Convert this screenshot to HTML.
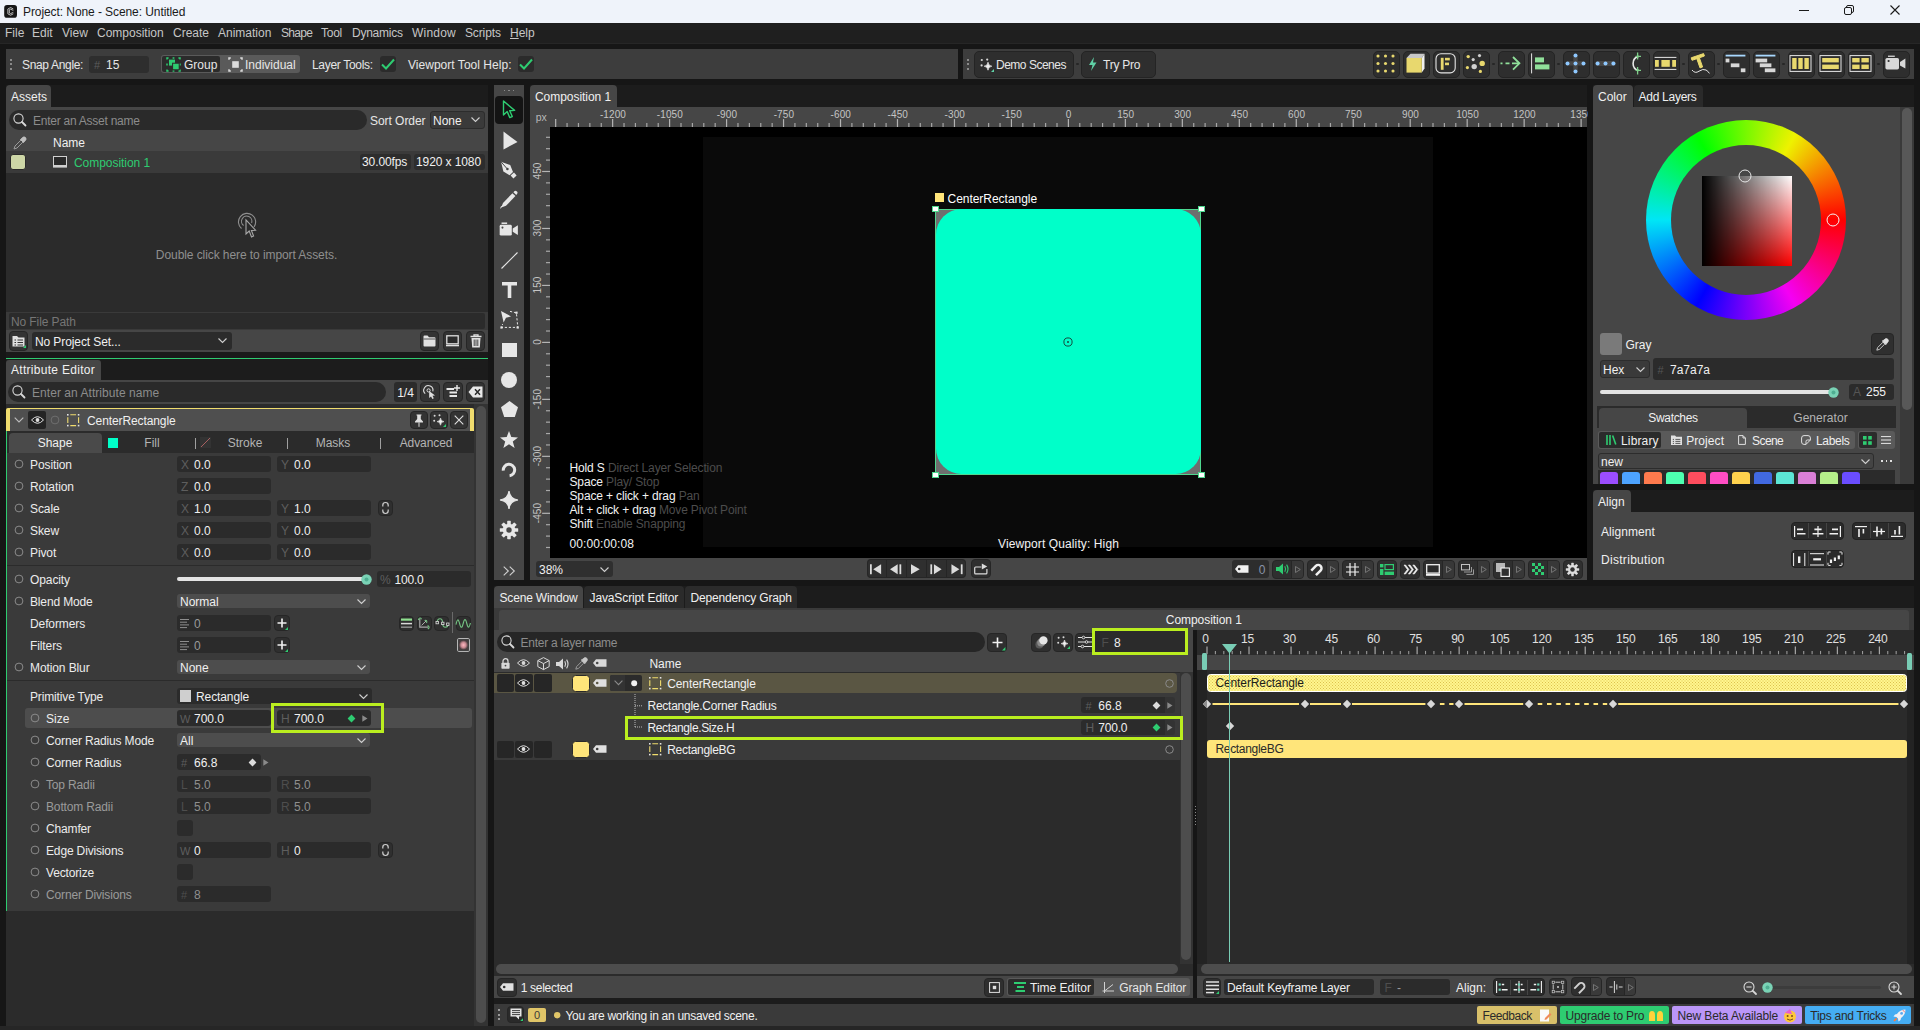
<!DOCTYPE html>
<html><head><meta charset="utf-8"><title>Cavalry</title>
<style>
html,body{margin:0;padding:0;}
body{width:1920px;height:1030px;overflow:hidden;background:#161616;position:relative;font-family:"Liberation Sans",sans-serif;font-size:12px;color:#e6e6e6;}
.a{position:absolute;box-sizing:border-box;}
.t{position:absolute;white-space:nowrap;}
svg{position:absolute;overflow:visible;}
</style></head><body>

<!-- parts.p01_top -->
<div class="a" style="left:0px;top:0px;width:1920px;height:23px;background:#eff3fa;"></div>
<svg style="left:3.6px;top:4.8px;" width="13.2" height="12.8" viewBox="0 0 16 16"><rect x="0" y="0" width="16" height="16" rx="3.6" fill="#161616"/><path d="M11.4 5 L8 3.2 L4.6 5 L4.6 11 L8 12.8 L11.4 11 M11.4 6.8 L8 5.2 L6.4 6 L6.4 10 L8 10.8 L11.4 9.2" fill="none" stroke="#e6e6e6" stroke-width="1"/></svg>
<div class="t" style="top:3.5px;height:16px;line-height:16px;font-size:12px;color:#1a1a1a;letter-spacing:-0.08px;left:23px;">Project: None - Scene: Untitled</div>
<svg style="left:1799px;top:5px;" width="12" height="12" viewBox="0 0 12 12"><path d="M0 5.5 H10" stroke="#1a1a1a" stroke-width="1"/></svg>
<svg style="left:1844px;top:5px;" width="12" height="12" viewBox="0 0 12 12"><rect x="0.5" y="2.5" width="7" height="7" rx="1.5" fill="none" stroke="#1a1a1a" stroke-width="1"/><path d="M2.5 2.5 V2 Q2.5 0.5 4 0.5 H8 Q9.5 0.5 9.5 2 V6 Q9.5 7.5 8 7.5 H7.5" fill="none" stroke="#1a1a1a" stroke-width="1"/></svg>
<svg style="left:1890px;top:5px;" width="12" height="12" viewBox="0 0 12 12"><path d="M0.5 0.5 L9.5 9.5 M9.5 0.5 L0.5 9.5" stroke="#1a1a1a" stroke-width="1.1"/></svg>
<div class="a" style="left:0px;top:23px;width:1920px;height:20px;background:#1f1f1f;"></div>
<div class="t" style="top:24.7px;height:16px;line-height:16px;font-size:12px;color:#c6c6c6;left:5px;">File</div>
<div class="t" style="top:24.7px;height:16px;line-height:16px;font-size:12px;color:#c6c6c6;left:32px;">Edit</div>
<div class="t" style="top:24.7px;height:16px;line-height:16px;font-size:12px;color:#c6c6c6;left:62px;">View</div>
<div class="t" style="top:24.7px;height:16px;line-height:16px;font-size:12px;color:#c6c6c6;left:97px;">Composition</div>
<div class="t" style="top:24.7px;height:16px;line-height:16px;font-size:12px;color:#c6c6c6;left:173px;">Create</div>
<div class="t" style="top:24.7px;height:16px;line-height:16px;font-size:12px;color:#c6c6c6;left:218px;">Animation</div>
<div class="t" style="top:24.7px;height:16px;line-height:16px;font-size:12px;color:#c6c6c6;letter-spacing:-0.7px;left:281px;">Shape</div>
<div class="t" style="top:24.7px;height:16px;line-height:16px;font-size:12px;color:#c6c6c6;letter-spacing:-0.25px;left:321px;">Tool</div>
<div class="t" style="top:24.7px;height:16px;line-height:16px;font-size:12px;color:#c6c6c6;letter-spacing:-0.25px;left:352px;">Dynamics</div>
<div class="t" style="top:24.7px;height:16px;line-height:16px;font-size:12px;color:#c6c6c6;letter-spacing:0.2px;left:412px;">Window</div>
<div class="t" style="top:24.7px;height:16px;line-height:16px;font-size:12px;color:#c6c6c6;letter-spacing:-0.13px;left:465px;">Scripts</div>
<div class="t" style="top:24.7px;height:16px;line-height:16px;font-size:12px;color:#c6c6c6;left:510px;"><span style="text-decoration:underline">H</span>elp</div>
<div class="a" style="left:0px;top:43px;width:1920px;height:1px;background:#262626;"></div>
<div class="a" style="left:6px;top:49px;width:952px;height:30px;background:#3d3d3d;"></div>
<div class="a" style="left:9.6px;top:58.8px;width:2px;height:2px;background:#8a8a8a;"></div>
<div class="a" style="left:9.6px;top:63.3px;width:2px;height:2px;background:#8a8a8a;"></div>
<div class="a" style="left:9.6px;top:67.8px;width:2px;height:2px;background:#8a8a8a;"></div>
<div class="t" style="top:56.5px;height:16px;line-height:16px;font-size:12px;color:#e6e6e6;letter-spacing:-0.33px;left:22px;">Snap Angle:</div>
<div class="a" style="left:89px;top:56px;width:60px;height:17px;background:#2e2e2e;border-radius:3px;"></div>
<div class="t" style="top:56.5px;height:16px;line-height:16px;font-size:11px;color:#5c5c5c;left:94px;">#</div>
<div class="t" style="top:56.5px;height:16px;line-height:16px;font-size:12px;color:#e6e6e6;left:106px;">15</div>
<div class="a" style="left:161px;top:55px;width:139px;height:18px;background:#5a5a5a;border-radius:3px;"></div>
<div class="a" style="left:162px;top:56px;width:58px;height:16px;background:#2b2b2b;border-radius:2px;"></div>
<svg style="left:167.3px;top:57.8px;" width="13" height="13" viewBox="0 0 13 13"><path d="M0 1.6 V0 H1.6 M5.6 0 H7.4 M11.4 0 H13 V1.6 M13 5.6 V7.4 M13 11.4 V13 H11.4 M7.4 13 H5.6 M1.6 13 H0 V11.4 M0 7.4 V5.6" fill="none" stroke="#2ecc71" stroke-width="1.5"/><rect x="2" y="1.6" width="6" height="6" fill="#2ecc71"/><rect x="5.6" y="5.2" width="6.6" height="6.6" fill="#2ecc71" stroke="#2b2b2b" stroke-width="1"/></svg>
<div class="t" style="top:56.5px;height:16px;line-height:16px;font-size:12px;color:#e6e6e6;left:184px;">Group</div>
<svg style="left:228.8px;top:57.8px;" width="13" height="13" viewBox="0 0 13 13"><rect x="3.2" y="3.2" width="6.6" height="6.6" fill="#dcdcdc"/><path d="M0 1.8 V0 H1.8 M11.2 0 H13 V1.8 M13 11.2 V13 H11.2 M1.8 13 H0 V11.2" fill="none" stroke="#dcdcdc" stroke-width="1.5"/></svg>
<div class="t" style="top:56.5px;height:16px;line-height:16px;font-size:12px;color:#e6e6e6;left:245px;">Individual</div>
<div class="t" style="top:56.5px;height:16px;line-height:16px;font-size:12px;color:#e6e6e6;letter-spacing:-0.31px;left:312px;">Layer Tools:</div>
<div class="a" style="left:380px;top:56px;width:16px;height:16px;background:#2b2b2b;border-radius:3px;"></div>
<svg style="left:380px;top:56px;" width="16" height="16" viewBox="0 0 16 16"><path d="M2 8.5 L6 12.5 L14 3.5" fill="none" stroke="#2ecc71" stroke-width="2"/></svg>
<div class="t" style="top:56.5px;height:16px;line-height:16px;font-size:12px;color:#e6e6e6;letter-spacing:0.03px;left:408px;">Viewport Tool Help:</div>
<div class="a" style="left:518px;top:56px;width:16px;height:16px;background:#2b2b2b;border-radius:3px;"></div>
<svg style="left:518px;top:56px;" width="16" height="16" viewBox="0 0 16 16"><path d="M2 8.5 L6 12.5 L14 3.5" fill="none" stroke="#2ecc71" stroke-width="2"/></svg>
<div class="a" style="left:963px;top:49px;width:951px;height:30px;background:#3d3d3d;"></div>
<div class="a" style="left:967.1px;top:58.8px;width:2px;height:2px;background:#8a8a8a;"></div>
<div class="a" style="left:967.1px;top:63.3px;width:2px;height:2px;background:#8a8a8a;"></div>
<div class="a" style="left:967.1px;top:67.8px;width:2px;height:2px;background:#8a8a8a;"></div>
<div class="a" style="left:974px;top:51px;width:100px;height:27px;background:#2e2e2e;border-radius:5px;border:1px solid #242424;"></div>
<svg style="left:980px;top:57.5px;" width="14" height="14" viewBox="0 0 14 14"><circle cx="1.8" cy="2" r="1.1" fill="#d8d8d8"/><circle cx="7.2" cy="1.6" r="1.1" fill="#d8d8d8"/><circle cx="1.6" cy="7.4" r="1.1" fill="#d8d8d8"/><path d="M8 4.2 Q8.3 7.9 11.8 8.2 Q8.3 8.5 8 12.2 Q7.7 8.5 4.2 8.2 Q7.7 7.9 8 4.2 Z" fill="#f0f0f0" stroke="#f0f0f0" stroke-width="0.7"/><path d="M11 14 L14 14 L14 11 Z" fill="#5fd0a5"/></svg>
<div class="t" style="top:56.5px;height:16px;line-height:16px;font-size:12px;color:#e6e6e6;letter-spacing:-0.49px;left:996px;">Demo Scenes</div>
<div class="a" style="left:1076.2px;top:62.8px;width:2.6px;height:2.6px;background:#262626;border-radius:1.3px;"></div>
<div class="a" style="left:1081px;top:51px;width:75px;height:27px;background:#2e2e2e;border-radius:5px;border:1px solid #242424;"></div>
<svg style="left:1088px;top:57px;" width="10" height="15" viewBox="0 0 10 15"><path d="M6 0 L1 8 H4.5 L3 14 L8.5 5.5 H5 Z" fill="#5fd0a5"/></svg>
<div class="t" style="top:56.5px;height:16px;line-height:16px;font-size:12px;color:#e6e6e6;letter-spacing:-0.24px;left:1103px;">Try Pro</div>
<!-- parts.p02_assets -->
<div class="a" style="left:6px;top:85px;width:482px;height:22px;background:#1c1c1c;"></div>
<div class="a" style="left:6px;top:85px;width:45px;height:22px;background:#464646;border-radius:4px 4px 0 0;"></div>
<div class="t" style="top:88.5px;height:16px;line-height:16px;font-size:12px;color:#f0f0f0;left:11px;">Assets</div>
<div class="a" style="left:6px;top:107px;width:482px;height:44px;background:#464646;"></div>
<div class="a" style="left:9px;top:110px;width:358px;height:20px;background:#2a2a2a;border-radius:10px;"></div>
<svg style="left:13px;top:113px;" width="14" height="14" viewBox="0 0 14 14"><circle cx="5.5" cy="5.5" r="4.6" fill="none" stroke="#d8d8d8" stroke-width="1.1"/><path d="M9 9 L12.5 12.5" stroke="#d8d8d8" stroke-width="1.8" stroke-linecap="round"/></svg>
<div class="t" style="top:112.5px;height:16px;line-height:16px;font-size:12px;color:#8c8c8c;letter-spacing:-0.25px;left:33px;">Enter an Asset name</div>
<div class="t" style="top:112.5px;height:16px;line-height:16px;font-size:12px;color:#e6e6e6;letter-spacing:-0.05px;left:370px;">Sort Order</div>
<div class="a" style="left:430px;top:111px;width:55px;height:18px;background:#3a3a3a;border-radius:3px;border:1px solid #2c2c2c;"></div>
<div class="t" style="top:112.5px;height:16px;line-height:16px;font-size:12px;color:#f0f0f0;left:433px;">None</div>
<svg style="left:471px;top:117px;" width="9" height="6" viewBox="0 0 9 6"><path d="M0.5 0.5 L4.5 4.5 L8.5 0.5" fill="none" stroke="#cfcfcf" stroke-width="1.1"/></svg>
<svg style="left:13px;top:136px;" width="14" height="14" viewBox="0 0 14 14"><path d="M1 13 L2 10 L8 4 L10 6 L4 12 Z" fill="none" stroke="#9a9a9a" stroke-width="1"/><path d="M7.5 3.5 L10.5 6.5 M9 2 Q11 0 12.5 1.5 Q14 3 12 5 L10.5 6.5 L7.5 3.5 Z" fill="#bdbdbd" stroke="#bdbdbd" stroke-width="0.8"/></svg>
<div class="t" style="top:134.5px;height:16px;line-height:16px;font-size:12px;color:#f0f0f0;left:53px;">Name</div>
<div class="a" style="left:6px;top:151px;width:482px;height:22px;background:#3a3a3a;"></div>
<div class="a" style="left:10px;top:154px;width:16px;height:16px;background:#cdd6a6;border-radius:3px;border:1px solid #2a2a2a;"></div>
<svg style="left:53px;top:156px;" width="14" height="12" viewBox="0 0 14 12"><rect x="0.5" y="0.5" width="13" height="9" fill="#2a2a2a" stroke="#d0d0d0" stroke-width="1"/><rect x="0" y="10" width="14" height="1.6" fill="#d0d0d0"/></svg>
<div class="t" style="top:154.5px;height:16px;line-height:16px;font-size:12px;color:#2ecc71;letter-spacing:-0.05px;left:74px;">Composition 1</div>
<div class="a" style="left:360px;top:154px;width:51px;height:16px;background:#2d2d2d;border-radius:3px;"></div>
<div class="t" style="top:154px;height:16px;line-height:16px;font-size:12px;color:#f0f0f0;letter-spacing:-0.1px;left:362px;">30.00fps</div>
<div class="a" style="left:414px;top:154px;width:71px;height:16px;background:#2d2d2d;border-radius:3px;"></div>
<div class="t" style="top:154px;height:16px;line-height:16px;font-size:12px;color:#f0f0f0;letter-spacing:-0.1px;left:416px;">1920 x 1080</div>
<div class="a" style="left:6px;top:173px;width:482px;height:139px;background:#2b2b2b;"></div>
<svg style="left:236px;top:211px;" width="24" height="30" viewBox="0 0 24 30"><path d="M5.5 17.5 A8.6 8.6 0 1 1 18 16" fill="none" stroke="#8f8f8f" stroke-width="1.1"/><path d="M7.6 14.5 A5.2 5.2 0 1 1 15.6 12" fill="none" stroke="#8f8f8f" stroke-width="1.1"/><path d="M10 9 L10 23 L13.2 20 L15.5 26 L17.6 25 L15.4 19.4 L19.5 19.2 Z" fill="#2b2b2b" stroke="#a8a8a8" stroke-width="1.1"/></svg>
<div class="t" style="top:246.5px;height:16px;line-height:16px;font-size:12px;color:#8f8f8f;letter-spacing:-0.08px;left:246.5px;transform:translateX(-50%);">Double click here to import Assets.</div>
<div class="a" style="left:6px;top:312px;width:482px;height:40px;background:#464646;"></div>
<div class="a" style="left:6px;top:312px;width:482px;height:18px;background:#3a3a3a;"></div>
<div class="a" style="left:9px;top:313px;width:476px;height:16px;background:#2b2b2b;border-radius:2px;"></div>
<div class="t" style="top:313.5px;height:16px;line-height:16px;font-size:12px;color:#767676;letter-spacing:-0.1px;left:11px;">No File Path</div>
<div class="a" style="left:9px;top:331px;width:19px;height:20px;background:#333;border-radius:4px;border:1px solid #262626;"></div>
<svg style="left:12px;top:334px;" width="14" height="14" viewBox="0 0 14 14"><path d="M0.5 2 H5 L6.5 3.5 H12.5 V12.5 H0.5 Z" fill="#e0e0e0"/><path d="M2.5 6 H4 M5.5 6 H11 M2.5 8.5 H4 M5.5 8.5 H11 M2.5 11 H4 M5.5 11 H11" stroke="#333" stroke-width="1.2"/><path d="M11 14 L14 14 L14 11 Z" fill="#2ecc71"/></svg>
<div class="a" style="left:32px;top:332px;width:200px;height:18px;background:#2b2b2b;border-radius:3px;"></div>
<div class="t" style="top:333.5px;height:16px;line-height:16px;font-size:12px;color:#f0f0f0;letter-spacing:-0.1px;left:35px;">No Project Set...</div>
<svg style="left:218px;top:338px;" width="9" height="6" viewBox="0 0 9 6"><path d="M0.5 0.5 L4.5 4.5 L8.5 0.5" fill="none" stroke="#cfcfcf" stroke-width="1.1"/></svg>
<div class="a" style="left:420px;top:331px;width:19px;height:20px;background:#333;border-radius:4px;border:1px solid #262626;"></div>
<div class="a" style="left:443px;top:331px;width:19px;height:20px;background:#333;border-radius:4px;border:1px solid #262626;"></div>
<div class="a" style="left:466px;top:331px;width:19px;height:20px;background:#333;border-radius:4px;border:1px solid #262626;"></div>
<svg style="left:423px;top:335px;" width="13" height="12" viewBox="0 0 13 12"><path d="M0.5 1.5 Q0.5 0.5 1.5 0.5 H4.5 L6 2.2 H11.5 Q12.5 2.2 12.5 3.2 V10.5 Q12.5 11.5 11.5 11.5 H1.5 Q0.5 11.5 0.5 10.5 Z" fill="#e0e0e0"/><path d="M0.5 4 H12.5" stroke="#333" stroke-width="0.8"/></svg>
<svg style="left:446px;top:335px;" width="13" height="12" viewBox="0 0 13 12"><rect x="0.8" y="0.8" width="11.4" height="8" fill="#2b2b2b" stroke="#e0e0e0" stroke-width="1.3"/><rect x="0" y="9.8" width="13" height="1.5" fill="#e0e0e0"/></svg>
<svg style="left:470px;top:334px;" width="12" height="14" viewBox="0 0 12 14"><path d="M0.5 2.5 H11.5 M4 2.5 V0.8 H8 V2.5" stroke="#e0e0e0" stroke-width="1.3" fill="none"/><path d="M1.5 4 H10.5 L9.8 13.5 H2.2 Z" fill="#e0e0e0"/><path d="M4.2 5.5 V12 M6 5.5 V12 M7.8 5.5 V12" stroke="#333" stroke-width="0.9"/></svg>
<div class="a" style="left:6px;top:352px;width:482px;height:6px;background:#1a1a1a;"></div>
<div class="a" style="left:6px;top:357.5px;width:482px;height:1.5px;background:#2ecc71;"></div>
<!-- parts.p03_attr -->
<div class="a" style="left:6px;top:359px;width:482px;height:21px;background:#1c1c1c;"></div>
<div class="a" style="left:6px;top:359.5px;width:95px;height:21px;background:#464646;border-radius:3px 3px 0 0;"></div>
<div class="t" style="top:362px;height:16px;line-height:16px;font-size:12px;color:#f0f0f0;letter-spacing:0.29px;left:11px;">Attribute Editor</div>
<div class="a" style="left:6px;top:380px;width:482px;height:24px;background:#464646;"></div>
<div class="a" style="left:8px;top:382px;width:378px;height:20px;background:#2a2a2a;border-radius:10px;"></div>
<svg style="left:12px;top:385px;" width="14" height="14" viewBox="0 0 14 14"><circle cx="5.5" cy="5.5" r="4.6" fill="none" stroke="#d8d8d8" stroke-width="1.1"/><path d="M9 9 L12.5 12.5" stroke="#d8d8d8" stroke-width="1.8" stroke-linecap="round"/></svg>
<div class="t" style="top:384.5px;height:16px;line-height:16px;font-size:12px;color:#8c8c8c;letter-spacing:0.05px;left:32px;">Enter an Attribute name</div>
<div class="a" style="left:394px;top:382px;width:23px;height:20px;background:#2b2b2b;border-radius:3px;"></div>
<div class="t" style="top:384.5px;height:16px;line-height:16px;font-size:12px;color:#f0f0f0;left:405.5px;transform:translateX(-50%);">1/4</div>
<div class="a" style="left:420px;top:382px;width:19.5px;height:20px;background:#333;border-radius:4px;border:1px solid #262626;"></div>
<div class="a" style="left:443px;top:382px;width:19.5px;height:20px;background:#333;border-radius:4px;border:1px solid #262626;"></div>
<div class="a" style="left:465.5px;top:382px;width:19.5px;height:20px;background:#333;border-radius:4px;border:1px solid #262626;"></div>
<svg style="left:423px;top:385px;" width="14" height="14" viewBox="0 0 14 14"><path d="M2.2 8.6 A4.6 4.6 0 1 1 9.8 6.4" fill="none" stroke="#e0e0e0" stroke-width="1.1"/><circle cx="5.6" cy="5.4" r="1.6" fill="none" stroke="#e0e0e0" stroke-width="1"/><path d="M6.2 6 L6.2 13 L8 11.4 L9.4 14 L10.8 13.3 L9.5 10.8 L12 10.6 Z" fill="#e0e0e0"/></svg>
<svg style="left:446px;top:385px;" width="14" height="14" viewBox="0 0 14 14"><path d="M0.5 4 H8 M3.5 7.5 H11 M3.5 11 H11" stroke="#e8e8e8" stroke-width="2"/><path d="M11 0 V6 M8 3 H14" stroke="#e8e8e8" stroke-width="1.4"/></svg>
<svg style="left:468px;top:386px;" width="15" height="12" viewBox="0 0 15 12"><path d="M0.5 6 L5 0.5 H14.5 V11.5 H5 Z" fill="#e8e8e8"/><path d="M7 3.2 L12 8.8 M12 3.2 L7 8.8" stroke="#2b2b2b" stroke-width="1.5"/></svg>
<div class="a" style="left:6px;top:404px;width:482px;height:622px;background:#2b2b2b;"></div>
<div class="a" style="left:474px;top:404px;width:14px;height:622px;background:#333;"></div>
<div class="a" style="left:476px;top:405.5px;width:10px;height:617px;background:#4d4d4d;border-radius:5px;"></div>
<div class="a" style="left:6px;top:408px;width:468px;height:23px;background:#4f4f4f;border-top:1.5px solid #f0dc6e;border-left:4.3px solid #f0dc6e;border-right:4.2px solid #f0dc6e;border-radius:2px 2px 0 0;"></div>
<svg style="left:14px;top:416.5px;" width="10" height="7" viewBox="0 0 10 7"><path d="M0.7 0.7 L5 5 L9.3 0.7" fill="none" stroke="#bdbdbd" stroke-width="1.1"/></svg>
<div class="a" style="left:28px;top:411px;width:18px;height:17.5px;background:#242424;border-radius:2px;"></div>
<svg style="left:30.5px;top:414.5px;" width="13" height="10" viewBox="0 0 13 10"><path d="M0.5 5 Q6.5 -1.6 12.5 5 Q6.5 11.6 0.5 5 Z" fill="none" stroke="#e0e0e0" stroke-width="1"/><circle cx="6.5" cy="5" r="1.9" fill="#e0e0e0"/></svg>
<svg style="left:50px;top:415px;" width="10" height="10" viewBox="0 0 10 10"><circle cx="5" cy="5" r="3.9" fill="none" stroke="#6e6e6e" stroke-width="1"/></svg>
<svg style="left:66.8px;top:413.8px;" width="12.4" height="12.4" viewBox="0 0 12.4 12.4"><rect x="0" y="0" width="1.6" height="1.6" fill="#e4e4e4"/><rect x="10.8" y="0" width="1.6" height="1.6" fill="#e4e4e4"/><rect x="0" y="10.8" width="1.6" height="1.6" fill="#e4e4e4"/><rect x="10.8" y="10.8" width="1.6" height="1.6" fill="#e4e4e4"/><path d="M3.3 0.8 H9.1 M3.3 11.6 H9.1 M0.8 3.3 V9.1 M11.6 3.3 V9.1" stroke="#f0dc6e" stroke-width="1.1"/></svg>
<div class="t" style="top:412.5px;height:16px;line-height:16px;font-size:12px;color:#f0f0f0;letter-spacing:-0.1px;left:87px;">CenterRectangle</div>
<div class="a" style="left:410px;top:411px;width:18px;height:18px;background:#333;border-radius:4px;border:1px solid #262626;"></div>
<div class="a" style="left:430px;top:411px;width:18px;height:18px;background:#333;border-radius:4px;border:1px solid #262626;"></div>
<div class="a" style="left:450px;top:411px;width:18px;height:18px;background:#333;border-radius:4px;border:1px solid #262626;"></div>
<svg style="left:414px;top:413.5px;" width="10" height="13" viewBox="0 0 10 13"><path d="M2.5 0.5 H7.5 V1.6 H6.8 V5 L9 7.6 V8.4 H1 V7.6 L3.2 5 V1.6 H2.5 Z" fill="#e0e0e0"/><path d="M5 8.4 V12.8" stroke="#e0e0e0" stroke-width="1"/></svg>
<svg style="left:433px;top:414px;" width="13" height="13" viewBox="0 0 13 13"><circle cx="1.6" cy="1.8" r="1" fill="#d8d8d8"/><circle cx="6.5" cy="1.2" r="1" fill="#d8d8d8"/><circle cx="1.2" cy="6.8" r="1" fill="#d8d8d8"/><path d="M7.5 4 Q7.8 7.3 11 7.6 Q7.8 7.9 7.5 11.2 Q7.2 7.9 4 7.6 Q7.2 7.3 7.5 4 Z" fill="#f0f0f0" stroke="#f0f0f0" stroke-width="0.6"/><path d="M10 13 L13 13 L13 10 Z" fill="#2ecc71"/></svg>
<svg style="left:454px;top:415px;" width="10" height="10" viewBox="0 0 10 10"><path d="M0.7 0.7 L9.3 9.3 M9.3 0.7 L0.7 9.3" stroke="#e0e0e0" stroke-width="1.1"/></svg>
<div class="a" style="left:6px;top:431px;width:1px;height:480px;background:#2ecc71;"></div>
<div class="a" style="left:7px;top:431px;width:467px;height:22px;background:#2b2b2b;"></div>
<div class="a" style="left:9px;top:433px;width:93px;height:20px;background:#4a4a4a;border-radius:4px 4px 0 0;"></div>
<div class="t" style="top:434.5px;height:16px;line-height:16px;font-size:12px;color:#f0f0f0;left:55px;transform:translateX(-50%);">Shape</div>
<div class="a" style="left:108px;top:438px;width:9.5px;height:9.5px;background:#00ffc8;"></div>
<div class="t" style="top:434.5px;height:16px;line-height:16px;font-size:12px;color:#b4b4b4;left:152px;transform:translateX(-50%);">Fill</div>
<div class="a" style="left:195.2px;top:438px;width:1px;height:11px;background:#a0a0a0;"></div>
<div class="a" style="left:200px;top:437px;width:11px;height:11px;background:#333;"></div>
<svg style="left:200px;top:437px;" width="11" height="11" viewBox="0 0 11 11"><path d="M1 10 L10 1" stroke="#a86060" stroke-width="1"/></svg>
<div class="t" style="top:434.5px;height:16px;line-height:16px;font-size:12px;color:#b4b4b4;left:245px;transform:translateX(-50%);">Stroke</div>
<div class="a" style="left:287.2px;top:438px;width:1px;height:11px;background:#a0a0a0;"></div>
<div class="t" style="top:434.5px;height:16px;line-height:16px;font-size:12px;color:#b4b4b4;left:333px;transform:translateX(-50%);">Masks</div>
<div class="a" style="left:380.2px;top:438px;width:1px;height:11px;background:#a0a0a0;"></div>
<div class="t" style="top:434.5px;height:16px;line-height:16px;font-size:12px;color:#b4b4b4;letter-spacing:-0.1px;left:426px;transform:translateX(-50%);">Advanced</div>
<div class="a" style="left:7px;top:453px;width:467px;height:458px;background:#3a3a3a;"></div>
<svg style="left:13.5px;top:459px;" width="10" height="10" viewBox="0 0 10 10"><circle cx="5" cy="5" r="3.9" fill="none" stroke="#8a8a8a" stroke-width="1"/></svg>
<div class="t" style="top:456.5px;height:16px;line-height:16px;font-size:12px;color:#ececec;letter-spacing:-0.1px;left:30px;">Position</div>
<div class="a" style="left:177px;top:456px;width:94px;height:16px;background:#2b2b2b;border-radius:3px;"></div><div class="t" style="top:456.5px;height:16px;line-height:16px;font-size:12px;color:#5e5e5e;left:181px;">X</div><div class="t" style="top:456.5px;height:16px;line-height:16px;font-size:12px;color:#f0f0f0;left:194px;">0.0</div>
<div class="a" style="left:277px;top:456px;width:94px;height:16px;background:#2b2b2b;border-radius:3px;"></div><div class="t" style="top:456.5px;height:16px;line-height:16px;font-size:12px;color:#5e5e5e;left:281px;">Y</div><div class="t" style="top:456.5px;height:16px;line-height:16px;font-size:12px;color:#f0f0f0;left:294px;">0.0</div>
<svg style="left:13.5px;top:481px;" width="10" height="10" viewBox="0 0 10 10"><circle cx="5" cy="5" r="3.9" fill="none" stroke="#8a8a8a" stroke-width="1"/></svg>
<div class="t" style="top:478.5px;height:16px;line-height:16px;font-size:12px;color:#ececec;letter-spacing:-0.1px;left:30px;">Rotation</div>
<div class="a" style="left:177px;top:478px;width:94px;height:16px;background:#2b2b2b;border-radius:3px;"></div><div class="t" style="top:478.5px;height:16px;line-height:16px;font-size:12px;color:#5e5e5e;left:181px;">Z</div><div class="t" style="top:478.5px;height:16px;line-height:16px;font-size:12px;color:#f0f0f0;left:194px;">0.0</div>
<svg style="left:13.5px;top:503px;" width="10" height="10" viewBox="0 0 10 10"><circle cx="5" cy="5" r="3.9" fill="none" stroke="#8a8a8a" stroke-width="1"/></svg>
<div class="t" style="top:500.5px;height:16px;line-height:16px;font-size:12px;color:#ececec;letter-spacing:-0.1px;left:30px;">Scale</div>
<div class="a" style="left:177px;top:500px;width:94px;height:16px;background:#2b2b2b;border-radius:3px;"></div><div class="t" style="top:500.5px;height:16px;line-height:16px;font-size:12px;color:#5e5e5e;left:181px;">X</div><div class="t" style="top:500.5px;height:16px;line-height:16px;font-size:12px;color:#f0f0f0;left:194px;">1.0</div>
<div class="a" style="left:277px;top:500px;width:94px;height:16px;background:#2b2b2b;border-radius:3px;"></div><div class="t" style="top:500.5px;height:16px;line-height:16px;font-size:12px;color:#5e5e5e;left:281px;">Y</div><div class="t" style="top:500.5px;height:16px;line-height:16px;font-size:12px;color:#f0f0f0;left:294px;">1.0</div>
<svg style="left:13.5px;top:525px;" width="10" height="10" viewBox="0 0 10 10"><circle cx="5" cy="5" r="3.9" fill="none" stroke="#8a8a8a" stroke-width="1"/></svg>
<div class="t" style="top:522.5px;height:16px;line-height:16px;font-size:12px;color:#ececec;letter-spacing:-0.1px;left:30px;">Skew</div>
<div class="a" style="left:177px;top:522px;width:94px;height:16px;background:#2b2b2b;border-radius:3px;"></div><div class="t" style="top:522.5px;height:16px;line-height:16px;font-size:12px;color:#5e5e5e;left:181px;">X</div><div class="t" style="top:522.5px;height:16px;line-height:16px;font-size:12px;color:#f0f0f0;left:194px;">0.0</div>
<div class="a" style="left:277px;top:522px;width:94px;height:16px;background:#2b2b2b;border-radius:3px;"></div><div class="t" style="top:522.5px;height:16px;line-height:16px;font-size:12px;color:#5e5e5e;left:281px;">Y</div><div class="t" style="top:522.5px;height:16px;line-height:16px;font-size:12px;color:#f0f0f0;left:294px;">0.0</div>
<svg style="left:13.5px;top:547px;" width="10" height="10" viewBox="0 0 10 10"><circle cx="5" cy="5" r="3.9" fill="none" stroke="#8a8a8a" stroke-width="1"/></svg>
<div class="t" style="top:544.5px;height:16px;line-height:16px;font-size:12px;color:#ececec;letter-spacing:-0.1px;left:30px;">Pivot</div>
<div class="a" style="left:177px;top:544px;width:94px;height:16px;background:#2b2b2b;border-radius:3px;"></div><div class="t" style="top:544.5px;height:16px;line-height:16px;font-size:12px;color:#5e5e5e;left:181px;">X</div><div class="t" style="top:544.5px;height:16px;line-height:16px;font-size:12px;color:#f0f0f0;left:194px;">0.0</div>
<div class="a" style="left:277px;top:544px;width:94px;height:16px;background:#2b2b2b;border-radius:3px;"></div><div class="t" style="top:544.5px;height:16px;line-height:16px;font-size:12px;color:#5e5e5e;left:281px;">Y</div><div class="t" style="top:544.5px;height:16px;line-height:16px;font-size:12px;color:#f0f0f0;left:294px;">0.0</div>
<div class="a" style="left:377.5px;top:500px;width:15px;height:16px;background:#2f2f2f;border-radius:4px;border:1px solid #262626;"></div><svg style="left:381.5px;top:502px;" width="7" height="12" viewBox="0 0 7 12"><path d="M0.8 4.5 V3.2 A2.7 2.7 0 0 1 6.2 3.2 V4.5 M0.8 7.5 V8.8 A2.7 2.7 0 0 0 6.2 8.8 V7.5" fill="none" stroke="#d0d0d0" stroke-width="1.2"/></svg>
<div class="a" style="left:7px;top:565px;width:467px;height:1px;background:#2b2b2b;"></div>
<svg style="left:13.5px;top:574px;" width="10" height="10" viewBox="0 0 10 10"><circle cx="5" cy="5" r="3.9" fill="none" stroke="#8a8a8a" stroke-width="1"/></svg>
<div class="t" style="top:571.5px;height:16px;line-height:16px;font-size:12px;color:#ececec;letter-spacing:-0.1px;left:30px;">Opacity</div>
<div class="a" style="left:177px;top:577.2px;width:188px;height:3.6px;background:#e4e4e4;border-radius:2px;"></div>
<svg style="left:360.5px;top:573.5px;" width="11" height="11" viewBox="0 0 11 11"><circle cx="5.5" cy="5.5" r="5.2" fill="#79d2b5"/><circle cx="5.5" cy="5.5" r="2" fill="#4fae92"/></svg>
<div class="a" style="left:377px;top:571px;width:94px;height:16px;background:#2b2b2b;border-radius:3px;"></div>
<div class="t" style="top:571.5px;height:16px;line-height:16px;font-size:12px;color:#5e5e5e;left:380px;">%</div>
<div class="t" style="top:571.5px;height:16px;line-height:16px;font-size:12px;color:#f0f0f0;letter-spacing:-0.2px;left:394.5px;">100.0</div>
<svg style="left:13.5px;top:596px;" width="10" height="10" viewBox="0 0 10 10"><circle cx="5" cy="5" r="3.9" fill="none" stroke="#8a8a8a" stroke-width="1"/></svg>
<div class="t" style="top:593.5px;height:16px;line-height:16px;font-size:12px;color:#ececec;letter-spacing:-0.15px;left:30px;">Blend Mode</div>
<div class="a" style="left:177px;top:594px;width:193px;height:14px;background:#4d4d4d;border-radius:3px;"></div><div class="t" style="top:593.5px;height:16px;line-height:16px;font-size:12px;color:#f0f0f0;left:180px;">Normal</div><svg style="left:357px;top:598.5px;" width="9" height="6" viewBox="0 0 9 6"><path d="M0.5 0.5 L4.5 4.5 L8.5 0.5" fill="none" stroke="#cfcfcf" stroke-width="1.1"/></svg>
<div class="t" style="top:615.5px;height:16px;line-height:16px;font-size:12px;color:#ececec;letter-spacing:-0.1px;left:30px;">Deformers</div>
<div class="a" style="left:177px;top:615px;width:94px;height:16px;background:#2b2b2b;border-radius:3px;"></div><svg style="left:180px;top:618.5px;" width="9" height="9" viewBox="0 0 9 9"><path d="M0 0.5 H9 M0 3.2 H7 M0 5.9 H9 M0 8.6 H7" stroke="#9a9a9a" stroke-width="0.9"/></svg><div class="t" style="top:615.5px;height:16px;line-height:16px;font-size:12px;color:#9a9a9a;left:194px;">0</div>
<div class="a" style="left:273.5px;top:615px;width:16px;height:16px;background:#2f2f2f;border-radius:4px;border:1px solid #262626;"></div><svg style="left:276.5px;top:618px;" width="10" height="10" viewBox="0 0 10 10"><path d="M5 0.5 V9.5 M0.5 5 H9.5" stroke="#f0f0f0" stroke-width="1.6"/></svg><svg style="left:285px;top:627px;" width="3" height="3" viewBox="0 0 3 3"><path d="M0 3 L3 3 L3 0 Z" fill="#2ecc71"/></svg>
<div class="t" style="top:637.5px;height:16px;line-height:16px;font-size:12px;color:#ececec;letter-spacing:-0.1px;left:30px;">Filters</div>
<div class="a" style="left:177px;top:637px;width:94px;height:16px;background:#2b2b2b;border-radius:3px;"></div><svg style="left:180px;top:640.5px;" width="9" height="9" viewBox="0 0 9 9"><path d="M0 0.5 H9 M0 3.2 H7 M0 5.9 H9 M0 8.6 H7" stroke="#9a9a9a" stroke-width="0.9"/></svg><div class="t" style="top:637.5px;height:16px;line-height:16px;font-size:12px;color:#9a9a9a;left:194px;">0</div>
<div class="a" style="left:273.5px;top:637px;width:16px;height:16px;background:#2f2f2f;border-radius:4px;border:1px solid #262626;"></div><svg style="left:276.5px;top:640px;" width="10" height="10" viewBox="0 0 10 10"><path d="M5 0.5 V9.5 M0.5 5 H9.5" stroke="#f0f0f0" stroke-width="1.6"/></svg><svg style="left:285px;top:649px;" width="3" height="3" viewBox="0 0 3 3"><path d="M0 3 L3 3 L3 0 Z" fill="#2ecc71"/></svg>
<div class="a" style="left:398.5px;top:615.5px;width:15px;height:15px;background:#2f2f2f;border-radius:4px;border:1px solid #262626;"></div>
<div class="a" style="left:416.5px;top:615.5px;width:15px;height:15px;background:#2f2f2f;border-radius:4px;border:1px solid #262626;"></div>
<div class="a" style="left:434.2px;top:615.5px;width:15px;height:15px;background:#2f2f2f;border-radius:4px;border:1px solid #262626;"></div>
<div class="a" style="left:455.5px;top:615.5px;width:15px;height:15px;background:#2f2f2f;border-radius:4px;border:1px solid #262626;"></div>
<div class="a" style="left:452px;top:612px;width:1px;height:21px;background:#6a6a6a;"></div>
<svg style="left:400.5px;top:617.5px;" width="11" height="11" viewBox="0 0 11 11"><path d="M0 1.6 H11" stroke="#8ee08e" stroke-width="2.2"/><path d="M0 5.6 H11" stroke="#dadada" stroke-width="1.5"/><path d="M0 9.2 H11" stroke="#8e8e8e" stroke-width="1.5"/></svg>
<svg style="left:418px;top:617px;" width="12" height="12" viewBox="0 0 12 12"><path d="M1.8 2 V10.2 H10" fill="none" stroke="#a8a8a8" stroke-width="1.2"/><path d="M3.6 8.4 L8 4" stroke="#b8b8b8" stroke-width="0.9"/><path d="M0.2 3 Q1.8 -0.6 3.6 2.2 M6.6 3.6 Q9.4 2.6 8.6 6 M9.6 8.6 Q12.6 10.2 9.8 12" fill="none" stroke="#74c282" stroke-width="1.1"/></svg>
<svg style="left:435.5px;top:618px;" width="13" height="10" viewBox="0 0 13 10"><path d="M1 4.6 Q1.4 0.8 4 0.8 Q6.6 0.8 6.6 5 Q6.6 9.2 9.4 9.2 Q12 9.2 12.2 6.2" fill="none" stroke="#74c282" stroke-width="1.1"/><rect x="0" y="3.4" width="2.4" height="2.4" fill="#3a3a3a" stroke="#dcdcdc" stroke-width="0.8"/><rect x="5.6" y="4.2" width="2.4" height="2.4" fill="#3a3a3a" stroke="#dcdcdc" stroke-width="0.8"/><rect x="10.6" y="5" width="2.4" height="2.4" fill="#3a3a3a" stroke="#dcdcdc" stroke-width="0.8"/></svg>
<svg style="left:455.8px;top:618.5px;" width="14.4" height="9" viewBox="0 0 14.4 9"><path d="M0 5.6 Q1.6 -3.2 3.6 4.5 Q5.4 12 7.2 4.5 Q9 -3.2 10.8 4.5 Q12.6 12 14.4 4" fill="none" stroke="#74c282" stroke-width="1.1"/></svg>
<svg style="left:456.5px;top:638px;" width="13" height="14" viewBox="0 0 13 14"><defs><radialGradient id="pk"><stop offset="0" stop-color="#ffb8c2"/><stop offset="0.55" stop-color="#c98a92"/><stop offset="1" stop-color="#4a3e40"/></radialGradient></defs><rect x="0.6" y="0.6" width="11.8" height="12.8" rx="1" fill="#333" stroke="#c4c4c4" stroke-width="1"/><rect x="2" y="2.2" width="9" height="9.6" fill="url(#pk)"/></svg>
<svg style="left:13.5px;top:662px;" width="10" height="10" viewBox="0 0 10 10"><circle cx="5" cy="5" r="3.9" fill="none" stroke="#8a8a8a" stroke-width="1"/></svg>
<div class="t" style="top:659.5px;height:16px;line-height:16px;font-size:12px;color:#ececec;letter-spacing:-0.1px;left:30px;">Motion Blur</div>
<div class="a" style="left:177px;top:660px;width:193px;height:14px;background:#4d4d4d;border-radius:3px;"></div><div class="t" style="top:659.5px;height:16px;line-height:16px;font-size:12px;color:#f0f0f0;left:180px;">None</div><svg style="left:357px;top:664.5px;" width="9" height="6" viewBox="0 0 9 6"><path d="M0.5 0.5 L4.5 4.5 L8.5 0.5" fill="none" stroke="#cfcfcf" stroke-width="1.1"/></svg>
<div class="a" style="left:7px;top:680px;width:467px;height:1px;background:#2b2b2b;"></div>
<div class="t" style="top:688.5px;height:16px;line-height:16px;font-size:12px;color:#ececec;letter-spacing:-0.15px;left:30px;">Primitive Type</div>
<div class="a" style="left:177px;top:688px;width:194.5px;height:15.5px;background:#2b2b2b;border-radius:3px;"></div>
<div class="a" style="left:179.5px;top:690px;width:11.5px;height:11.5px;background:#cfcfcf;"></div>
<div class="t" style="top:688.5px;height:16px;line-height:16px;font-size:12px;color:#f0f0f0;letter-spacing:-0.1px;left:196px;">Rectangle</div>
<svg style="left:358.5px;top:693.5px;" width="9" height="6" viewBox="0 0 9 6"><path d="M0.5 0.5 L4.5 4.5 L8.5 0.5" fill="none" stroke="#cfcfcf" stroke-width="1.1"/></svg>
<div class="a" style="left:25px;top:708px;width:447px;height:19.5px;background:#4d4d4d;border-radius:3px;"></div>
<svg style="left:30px;top:713px;" width="10" height="10" viewBox="0 0 10 10"><circle cx="5" cy="5" r="3.9" fill="none" stroke="#8a8a8a" stroke-width="1"/></svg>
<div class="t" style="top:710.5px;height:16px;line-height:16px;font-size:12px;color:#ececec;left:46px;">Size</div>
<div class="a" style="left:177px;top:710px;width:94px;height:16px;background:#2b2b2b;border-radius:3px;"></div><div class="t" style="top:710.5px;height:16px;line-height:16px;font-size:11px;color:#5e5e5e;left:180px;">W</div><div class="t" style="top:710.5px;height:16px;line-height:16px;font-size:12px;color:#f0f0f0;left:194px;">700.0</div>
<div class="a" style="left:277px;top:710px;width:94px;height:16px;background:#2b2b2b;border-radius:3px;"></div><div class="t" style="top:710.5px;height:16px;line-height:16px;font-size:12px;color:#5e5e5e;left:281px;">H</div><div class="t" style="top:710.5px;height:16px;line-height:16px;font-size:12px;color:#f0f0f0;left:294px;">700.0</div>
<svg style="left:347px;top:713.5px;" width="9" height="9" viewBox="0 0 9 9"><path d="M4.5 0.6 L8.4 4.5 L4.5 8.4 L0.6 4.5 Z" fill="#2ecc71"/></svg>
<svg style="left:362px;top:714.5px;" width="6" height="7" viewBox="0 0 6 7"><path d="M0.3 0.3 L5.5 3.5 L0.3 6.7 Z" fill="#8a8a8a"/></svg>
<div class="a" style="left:270.9px;top:702.8px;width:113.3px;height:30.3px;border:3.3px solid #baee1f;"></div>
<svg style="left:30px;top:735px;" width="10" height="10" viewBox="0 0 10 10"><circle cx="5" cy="5" r="3.9" fill="none" stroke="#8a8a8a" stroke-width="1"/></svg>
<div class="t" style="top:732.5px;height:16px;line-height:16px;font-size:12px;color:#ececec;letter-spacing:-0.15px;left:46px;">Corner Radius Mode</div>
<svg style="left:30px;top:757px;" width="10" height="10" viewBox="0 0 10 10"><circle cx="5" cy="5" r="3.9" fill="none" stroke="#8a8a8a" stroke-width="1"/></svg>
<div class="t" style="top:754.5px;height:16px;line-height:16px;font-size:12px;color:#ececec;letter-spacing:-0.15px;left:46px;">Corner Radius</div>
<svg style="left:30px;top:779px;" width="10" height="10" viewBox="0 0 10 10"><circle cx="5" cy="5" r="3.9" fill="none" stroke="#8a8a8a" stroke-width="1"/></svg>
<div class="t" style="top:776.5px;height:16px;line-height:16px;font-size:12px;color:#9a9a9a;letter-spacing:-0.15px;left:46px;">Top Radii</div>
<svg style="left:30px;top:801px;" width="10" height="10" viewBox="0 0 10 10"><circle cx="5" cy="5" r="3.9" fill="none" stroke="#8a8a8a" stroke-width="1"/></svg>
<div class="t" style="top:798.5px;height:16px;line-height:16px;font-size:12px;color:#9a9a9a;letter-spacing:-0.15px;left:46px;">Bottom Radii</div>
<svg style="left:30px;top:823px;" width="10" height="10" viewBox="0 0 10 10"><circle cx="5" cy="5" r="3.9" fill="none" stroke="#8a8a8a" stroke-width="1"/></svg>
<div class="t" style="top:820.5px;height:16px;line-height:16px;font-size:12px;color:#ececec;letter-spacing:-0.15px;left:46px;">Chamfer</div>
<svg style="left:30px;top:845px;" width="10" height="10" viewBox="0 0 10 10"><circle cx="5" cy="5" r="3.9" fill="none" stroke="#8a8a8a" stroke-width="1"/></svg>
<div class="t" style="top:842.5px;height:16px;line-height:16px;font-size:12px;color:#ececec;letter-spacing:-0.15px;left:46px;">Edge Divisions</div>
<svg style="left:30px;top:867px;" width="10" height="10" viewBox="0 0 10 10"><circle cx="5" cy="5" r="3.9" fill="none" stroke="#8a8a8a" stroke-width="1"/></svg>
<div class="t" style="top:864.5px;height:16px;line-height:16px;font-size:12px;color:#ececec;letter-spacing:-0.15px;left:46px;">Vectorize</div>
<svg style="left:30px;top:889px;" width="10" height="10" viewBox="0 0 10 10"><circle cx="5" cy="5" r="3.9" fill="none" stroke="#8a8a8a" stroke-width="1"/></svg>
<div class="t" style="top:886.5px;height:16px;line-height:16px;font-size:12px;color:#9a9a9a;letter-spacing:-0.15px;left:46px;">Corner Divisions</div>
<div class="a" style="left:177px;top:733px;width:193px;height:14px;background:#4d4d4d;border-radius:3px;"></div><div class="t" style="top:732.5px;height:16px;line-height:16px;font-size:12px;color:#f0f0f0;left:180px;">All</div><svg style="left:357px;top:737.5px;" width="9" height="6" viewBox="0 0 9 6"><path d="M0.5 0.5 L4.5 4.5 L8.5 0.5" fill="none" stroke="#cfcfcf" stroke-width="1.1"/></svg>
<div class="a" style="left:177px;top:754px;width:84px;height:16px;background:#2b2b2b;border-radius:3px;"></div>
<div class="t" style="top:754.5px;height:16px;line-height:16px;font-size:11px;color:#5e5e5e;left:181px;">#</div>
<div class="t" style="top:754.5px;height:16px;line-height:16px;font-size:12px;color:#f0f0f0;left:194px;">66.8</div>
<svg style="left:247.5px;top:757.5px;" width="9" height="9" viewBox="0 0 9 9"><path d="M4.5 0.6 L8.4 4.5 L4.5 8.4 L0.6 4.5 Z" fill="#dcdcdc"/></svg>
<svg style="left:262.5px;top:758.5px;" width="6" height="7" viewBox="0 0 6 7"><path d="M0.3 0.3 L5.5 3.5 L0.3 6.7 Z" fill="#8a8a8a"/></svg>
<div class="a" style="left:177px;top:776px;width:94px;height:16px;background:#2b2b2b;border-radius:3px;"></div><div class="t" style="top:776.5px;height:16px;line-height:16px;font-size:12px;color:#4e4e4e;left:181px;">L</div><div class="t" style="top:776.5px;height:16px;line-height:16px;font-size:12px;color:#8f8f8f;left:194px;">5.0</div>
<div class="a" style="left:277px;top:776px;width:94px;height:16px;background:#2b2b2b;border-radius:3px;"></div><div class="t" style="top:776.5px;height:16px;line-height:16px;font-size:12px;color:#4e4e4e;left:281px;">R</div><div class="t" style="top:776.5px;height:16px;line-height:16px;font-size:12px;color:#8f8f8f;left:294px;">5.0</div>
<div class="a" style="left:177px;top:798px;width:94px;height:16px;background:#2b2b2b;border-radius:3px;"></div><div class="t" style="top:798.5px;height:16px;line-height:16px;font-size:12px;color:#4e4e4e;left:181px;">L</div><div class="t" style="top:798.5px;height:16px;line-height:16px;font-size:12px;color:#8f8f8f;left:194px;">5.0</div>
<div class="a" style="left:277px;top:798px;width:94px;height:16px;background:#2b2b2b;border-radius:3px;"></div><div class="t" style="top:798.5px;height:16px;line-height:16px;font-size:12px;color:#4e4e4e;left:281px;">R</div><div class="t" style="top:798.5px;height:16px;line-height:16px;font-size:12px;color:#8f8f8f;left:294px;">5.0</div>
<div class="a" style="left:177px;top:820px;width:16px;height:16px;background:#2b2b2b;border-radius:3px;"></div>
<div class="a" style="left:177px;top:864px;width:16px;height:16px;background:#2b2b2b;border-radius:3px;"></div>
<div class="a" style="left:177px;top:842px;width:94px;height:16px;background:#2b2b2b;border-radius:3px;"></div><div class="t" style="top:842.5px;height:16px;line-height:16px;font-size:11px;color:#5e5e5e;left:180px;">W</div><div class="t" style="top:842.5px;height:16px;line-height:16px;font-size:12px;color:#f0f0f0;left:194px;">0</div>
<div class="a" style="left:277px;top:842px;width:94px;height:16px;background:#2b2b2b;border-radius:3px;"></div><div class="t" style="top:842.5px;height:16px;line-height:16px;font-size:12px;color:#5e5e5e;left:281px;">H</div><div class="t" style="top:842.5px;height:16px;line-height:16px;font-size:12px;color:#f0f0f0;left:294px;">0</div>
<div class="a" style="left:377.5px;top:842px;width:15px;height:16px;background:#2f2f2f;border-radius:4px;border:1px solid #262626;"></div><svg style="left:381.5px;top:844px;" width="7" height="12" viewBox="0 0 7 12"><path d="M0.8 4.5 V3.2 A2.7 2.7 0 0 1 6.2 3.2 V4.5 M0.8 7.5 V8.8 A2.7 2.7 0 0 0 6.2 8.8 V7.5" fill="none" stroke="#d0d0d0" stroke-width="1.2"/></svg>
<div class="a" style="left:177px;top:886px;width:94px;height:16px;background:#2b2b2b;border-radius:3px;"></div>
<div class="t" style="top:886.5px;height:16px;line-height:16px;font-size:11px;color:#4e4e4e;left:181px;">#</div>
<div class="t" style="top:886.5px;height:16px;line-height:16px;font-size:12px;color:#8f8f8f;left:194px;">8</div>
<!-- parts.p04_viewport -->
<div class="a" style="left:494px;top:85px;width:30px;height:494.5px;background:#464646;"></div>
<div class="a" style="left:503.8px;top:89.5px;width:1.5px;height:1.5px;background:#8a8a8a;"></div>
<div class="a" style="left:508.3px;top:89.5px;width:1.5px;height:1.5px;background:#8a8a8a;"></div>
<div class="a" style="left:512.8px;top:89.5px;width:1.5px;height:1.5px;background:#8a8a8a;"></div>
<div class="a" style="left:495px;top:96px;width:28px;height:27.5px;background:#141414;border-radius:4px;"></div>
<svg style="left:502px;top:100px;" width="15" height="19" viewBox="0 0 15 19"><path d="M1.5 1 L1.5 15 L5.2 11.6 L7.8 17.6 L10.3 16.5 L7.7 10.7 L12.6 10.4 Z" fill="none" stroke="#2ecc71" stroke-width="1.4" stroke-linejoin="round"/></svg>
<svg style="left:503px;top:131px;" width="15" height="19" viewBox="0 0 15 19"><path d="M0.5 0.5 L0.5 18.5 L14.5 11 Z" fill="#e6e6e6"/></svg>
<svg style="left:500px;top:161px;" width="18" height="18" viewBox="0 0 18 18"><path d="M1 0.8 L10.2 4 L13 11 L9.6 14.2 L3.4 10.6 Z" fill="#e6e6e6"/><path d="M1 0.8 L7 7.6" stroke="#464646" stroke-width="1"/><circle cx="7.4" cy="8" r="1.3" fill="#464646"/><path d="M10.6 14.6 L14 11.6 L16.6 14.4 L13.4 17.4 Z" fill="#e6e6e6"/></svg>
<svg style="left:500px;top:190px;" width="18" height="19" viewBox="0 0 18 19"><path d="M3 13 L12.4 3.2 L15.4 6 L6 15.8 L1.2 17.6 Z" fill="#e6e6e6"/><path d="M13.4 2.2 L14.6 1 Q15.6 0.2 16.6 1.2 L17.2 1.8 Q18 2.8 17.2 3.8 L16.2 5 Z" fill="#e6e6e6"/><path d="M0.6 18.4 L1.6 16" stroke="#e6e6e6" stroke-width="1"/></svg>
<svg style="left:499px;top:222.3px;" width="20" height="14" viewBox="0 0 20 15"><rect x="0" y="3" width="13" height="11.5" rx="1.5" fill="#e6e6e6"/><rect x="2" y="0.5" width="6" height="1.6" fill="#e6e6e6"/><path d="M14 7 L19.5 3.5 V14 L14 10.5 Z" fill="#e6e6e6"/><circle cx="3" cy="6" r="1.1" fill="#464646"/></svg>
<svg style="left:501px;top:252px;" width="17" height="17" viewBox="0 0 17 17"><path d="M0.5 16.5 L16.5 0.5" stroke="#e6e6e6" stroke-width="1.1"/></svg>
<svg style="left:501.5px;top:282px;" width="15" height="16" viewBox="0 0 15 16"><path d="M0 0 H15 V3.4 H9.3 V16 H5.7 V3.4 H0 Z" fill="#e6e6e6"/></svg>
<svg style="left:500px;top:310px;" width="19" height="19" viewBox="0 0 19 19"><path d="M1 1 L11 6.4 L6 7.8 L3.6 12.4 Z" fill="#e6e6e6"/><path d="M10 1.4 L16.4 2.8 L17.8 17.4 L1.6 17.4 L2.6 14" fill="none" stroke="#e6e6e6" stroke-width="1" stroke-dasharray="2.2 1.8"/><rect x="15.4" y="1.6" width="2.2" height="2.2" fill="#e6e6e6"/><rect x="16.6" y="16.4" width="2.2" height="2.2" fill="#e6e6e6"/><rect x="0.4" y="16.4" width="2.2" height="2.2" fill="#e6e6e6"/></svg>
<div class="a" style="left:502px;top:342.5px;width:14.5px;height:14px;background:#e6e6e6;"></div>
<svg style="left:501px;top:372px;" width="16" height="16" viewBox="0 0 16 16"><circle cx="8" cy="8" r="8" fill="#e6e6e6"/></svg>
<svg style="left:500.5px;top:401px;" width="17" height="16" viewBox="0 0 17 16"><path d="M8.5 0 L17 6.2 L13.8 16 H3.2 L0 6.2 Z" fill="#e6e6e6"/></svg>
<svg style="left:500px;top:430.5px;" width="18" height="17" viewBox="0 0 18 17"><path d="M9 0 L11.3 6 L18 6.4 L12.8 10.5 L14.6 17 L9 13.3 L3.4 17 L5.2 10.5 L0 6.4 L6.7 6 Z" fill="#e6e6e6"/></svg>
<svg style="left:501px;top:462px;" width="16" height="16" viewBox="0 0 16 16"><path d="M2.3 8.6 A5.7 5.7 0 1 1 8.6 13.7" fill="none" stroke="#e6e6e6" stroke-width="3"/></svg>
<svg style="left:500px;top:491px;" width="18" height="18" viewBox="0 0 18 18"><path d="M9 0 Q10 8 18 9 Q10 10 9 18 Q8 10 0 9 Q8 8 9 0 Z" fill="#e6e6e6" stroke="#e6e6e6" stroke-width="1.2"/></svg>
<svg style="left:500px;top:521px;" width="18" height="18" viewBox="0 0 18 18"><rect x="7.2" y="-0.2" width="3.6" height="5" rx="0.6" fill="#e6e6e6" transform="rotate(0 9 9)"/><rect x="7.2" y="-0.2" width="3.6" height="5" rx="0.6" fill="#e6e6e6" transform="rotate(45 9 9)"/><rect x="7.2" y="-0.2" width="3.6" height="5" rx="0.6" fill="#e6e6e6" transform="rotate(90 9 9)"/><rect x="7.2" y="-0.2" width="3.6" height="5" rx="0.6" fill="#e6e6e6" transform="rotate(135 9 9)"/><rect x="7.2" y="-0.2" width="3.6" height="5" rx="0.6" fill="#e6e6e6" transform="rotate(180 9 9)"/><rect x="7.2" y="-0.2" width="3.6" height="5" rx="0.6" fill="#e6e6e6" transform="rotate(225 9 9)"/><rect x="7.2" y="-0.2" width="3.6" height="5" rx="0.6" fill="#e6e6e6" transform="rotate(270 9 9)"/><rect x="7.2" y="-0.2" width="3.6" height="5" rx="0.6" fill="#e6e6e6" transform="rotate(315 9 9)"/><circle cx="9" cy="9" r="6.3" fill="#e6e6e6"/><circle cx="9" cy="9" r="2.7" fill="#464646"/></svg>
<svg style="left:503px;top:565.5px;" width="13" height="10" viewBox="0 0 13 10"><path d="M0.7 0.7 L5.3 5 L0.7 9.3 M6.7 0.7 L11.3 5 L6.7 9.3" fill="none" stroke="#cfcfcf" stroke-width="1.1"/></svg>
<div class="a" style="left:530px;top:85px;width:1057.2px;height:22px;background:#1c1c1c;"></div>
<div class="a" style="left:530px;top:85px;width:87px;height:22px;background:#464646;border-radius:4px 4px 0 0;"></div>
<div class="t" style="top:88.5px;height:16px;line-height:16px;font-size:12px;color:#f0f0f0;letter-spacing:-0.05px;left:535px;">Composition 1</div>
<div class="a" style="left:530px;top:107px;width:1057.2px;height:20px;background:#464646;"></div>
<div class="a" style="left:530px;top:127px;width:20px;height:430.5px;background:#464646;"></div>
<div class="t" style="top:109.3px;height:16px;line-height:16px;font-size:10.5px;color:#b8b8b8;left:535.7px;">px</div>
<div class="a" style="left:550px;top:127px;width:1037.2px;height:430.5px;background:#000;"></div>
<div class="a" style="left:703.2px;top:136.7px;width:730px;height:410.6px;background:#0a0a0a;"></div>
<svg style="left:530px;top:107px;" width="1057.2" height="20" viewBox="0 0 1057.2 20"><path d="M25.67 12.1 V20" stroke="#b4b4b4" stroke-width="1.2"/><path d="M37.06 16 V20" stroke="#a8a8a8" stroke-width="1.2"/><path d="M48.46 16 V20" stroke="#a8a8a8" stroke-width="1.2"/><path d="M59.85 16 V20" stroke="#a8a8a8" stroke-width="1.2"/><path d="M71.25 16 V20" stroke="#a8a8a8" stroke-width="1.2"/><path d="M82.64 12.1 V20" stroke="#b4b4b4" stroke-width="1.2"/><path d="M94.03 16 V20" stroke="#a8a8a8" stroke-width="1.2"/><path d="M105.43 16 V20" stroke="#a8a8a8" stroke-width="1.2"/><path d="M116.82 16 V20" stroke="#a8a8a8" stroke-width="1.2"/><path d="M128.22 16 V20" stroke="#a8a8a8" stroke-width="1.2"/><path d="M139.61 12.1 V20" stroke="#b4b4b4" stroke-width="1.2"/><path d="M151.00 16 V20" stroke="#a8a8a8" stroke-width="1.2"/><path d="M162.40 16 V20" stroke="#a8a8a8" stroke-width="1.2"/><path d="M173.79 16 V20" stroke="#a8a8a8" stroke-width="1.2"/><path d="M185.19 16 V20" stroke="#a8a8a8" stroke-width="1.2"/><path d="M196.58 12.1 V20" stroke="#b4b4b4" stroke-width="1.2"/><path d="M207.97 16 V20" stroke="#a8a8a8" stroke-width="1.2"/><path d="M219.37 16 V20" stroke="#a8a8a8" stroke-width="1.2"/><path d="M230.76 16 V20" stroke="#a8a8a8" stroke-width="1.2"/><path d="M242.16 16 V20" stroke="#a8a8a8" stroke-width="1.2"/><path d="M253.55 12.1 V20" stroke="#b4b4b4" stroke-width="1.2"/><path d="M264.94 16 V20" stroke="#a8a8a8" stroke-width="1.2"/><path d="M276.34 16 V20" stroke="#a8a8a8" stroke-width="1.2"/><path d="M287.73 16 V20" stroke="#a8a8a8" stroke-width="1.2"/><path d="M299.13 16 V20" stroke="#a8a8a8" stroke-width="1.2"/><path d="M310.52 12.1 V20" stroke="#b4b4b4" stroke-width="1.2"/><path d="M321.91 16 V20" stroke="#a8a8a8" stroke-width="1.2"/><path d="M333.31 16 V20" stroke="#a8a8a8" stroke-width="1.2"/><path d="M344.70 16 V20" stroke="#a8a8a8" stroke-width="1.2"/><path d="M356.10 16 V20" stroke="#a8a8a8" stroke-width="1.2"/><path d="M367.49 12.1 V20" stroke="#b4b4b4" stroke-width="1.2"/><path d="M378.88 16 V20" stroke="#a8a8a8" stroke-width="1.2"/><path d="M390.28 16 V20" stroke="#a8a8a8" stroke-width="1.2"/><path d="M401.67 16 V20" stroke="#a8a8a8" stroke-width="1.2"/><path d="M413.07 16 V20" stroke="#a8a8a8" stroke-width="1.2"/><path d="M424.46 12.1 V20" stroke="#b4b4b4" stroke-width="1.2"/><path d="M435.85 16 V20" stroke="#a8a8a8" stroke-width="1.2"/><path d="M447.25 16 V20" stroke="#a8a8a8" stroke-width="1.2"/><path d="M458.64 16 V20" stroke="#a8a8a8" stroke-width="1.2"/><path d="M470.04 16 V20" stroke="#a8a8a8" stroke-width="1.2"/><path d="M481.43 12.1 V20" stroke="#b4b4b4" stroke-width="1.2"/><path d="M492.82 16 V20" stroke="#a8a8a8" stroke-width="1.2"/><path d="M504.22 16 V20" stroke="#a8a8a8" stroke-width="1.2"/><path d="M515.61 16 V20" stroke="#a8a8a8" stroke-width="1.2"/><path d="M527.01 16 V20" stroke="#a8a8a8" stroke-width="1.2"/><path d="M538.40 12.1 V20" stroke="#b4b4b4" stroke-width="1.2"/><path d="M549.79 16 V20" stroke="#a8a8a8" stroke-width="1.2"/><path d="M561.19 16 V20" stroke="#a8a8a8" stroke-width="1.2"/><path d="M572.58 16 V20" stroke="#a8a8a8" stroke-width="1.2"/><path d="M583.98 16 V20" stroke="#a8a8a8" stroke-width="1.2"/><path d="M595.37 12.1 V20" stroke="#b4b4b4" stroke-width="1.2"/><path d="M606.76 16 V20" stroke="#a8a8a8" stroke-width="1.2"/><path d="M618.16 16 V20" stroke="#a8a8a8" stroke-width="1.2"/><path d="M629.55 16 V20" stroke="#a8a8a8" stroke-width="1.2"/><path d="M640.95 16 V20" stroke="#a8a8a8" stroke-width="1.2"/><path d="M652.34 12.1 V20" stroke="#b4b4b4" stroke-width="1.2"/><path d="M663.73 16 V20" stroke="#a8a8a8" stroke-width="1.2"/><path d="M675.13 16 V20" stroke="#a8a8a8" stroke-width="1.2"/><path d="M686.52 16 V20" stroke="#a8a8a8" stroke-width="1.2"/><path d="M697.92 16 V20" stroke="#a8a8a8" stroke-width="1.2"/><path d="M709.31 12.1 V20" stroke="#b4b4b4" stroke-width="1.2"/><path d="M720.70 16 V20" stroke="#a8a8a8" stroke-width="1.2"/><path d="M732.10 16 V20" stroke="#a8a8a8" stroke-width="1.2"/><path d="M743.49 16 V20" stroke="#a8a8a8" stroke-width="1.2"/><path d="M754.89 16 V20" stroke="#a8a8a8" stroke-width="1.2"/><path d="M766.28 12.1 V20" stroke="#b4b4b4" stroke-width="1.2"/><path d="M777.67 16 V20" stroke="#a8a8a8" stroke-width="1.2"/><path d="M789.07 16 V20" stroke="#a8a8a8" stroke-width="1.2"/><path d="M800.46 16 V20" stroke="#a8a8a8" stroke-width="1.2"/><path d="M811.86 16 V20" stroke="#a8a8a8" stroke-width="1.2"/><path d="M823.25 12.1 V20" stroke="#b4b4b4" stroke-width="1.2"/><path d="M834.64 16 V20" stroke="#a8a8a8" stroke-width="1.2"/><path d="M846.04 16 V20" stroke="#a8a8a8" stroke-width="1.2"/><path d="M857.43 16 V20" stroke="#a8a8a8" stroke-width="1.2"/><path d="M868.83 16 V20" stroke="#a8a8a8" stroke-width="1.2"/><path d="M880.22 12.1 V20" stroke="#b4b4b4" stroke-width="1.2"/><path d="M891.61 16 V20" stroke="#a8a8a8" stroke-width="1.2"/><path d="M903.01 16 V20" stroke="#a8a8a8" stroke-width="1.2"/><path d="M914.40 16 V20" stroke="#a8a8a8" stroke-width="1.2"/><path d="M925.80 16 V20" stroke="#a8a8a8" stroke-width="1.2"/><path d="M937.19 12.1 V20" stroke="#b4b4b4" stroke-width="1.2"/><path d="M948.58 16 V20" stroke="#a8a8a8" stroke-width="1.2"/><path d="M959.98 16 V20" stroke="#a8a8a8" stroke-width="1.2"/><path d="M971.37 16 V20" stroke="#a8a8a8" stroke-width="1.2"/><path d="M982.77 16 V20" stroke="#a8a8a8" stroke-width="1.2"/><path d="M994.16 12.1 V20" stroke="#b4b4b4" stroke-width="1.2"/><path d="M1005.55 16 V20" stroke="#a8a8a8" stroke-width="1.2"/><path d="M1016.95 16 V20" stroke="#a8a8a8" stroke-width="1.2"/><path d="M1028.34 16 V20" stroke="#a8a8a8" stroke-width="1.2"/><path d="M1039.74 16 V20" stroke="#a8a8a8" stroke-width="1.2"/><path d="M1051.13 12.1 V20" stroke="#b4b4b4" stroke-width="1.2"/></svg>
<div class="t" style="top:108.6px;height:12px;line-height:12px;font-size:10px;color:#c4c4c4;letter-spacing:0.1px;left:612.94px;transform:translateX(-50%);">-1200</div>
<div class="t" style="top:108.6px;height:12px;line-height:12px;font-size:10px;color:#c4c4c4;letter-spacing:0.1px;left:669.91px;transform:translateX(-50%);">-1050</div>
<div class="t" style="top:108.6px;height:12px;line-height:12px;font-size:10px;color:#c4c4c4;letter-spacing:0.1px;left:726.88px;transform:translateX(-50%);">-900</div>
<div class="t" style="top:108.6px;height:12px;line-height:12px;font-size:10px;color:#c4c4c4;letter-spacing:0.1px;left:783.85px;transform:translateX(-50%);">-750</div>
<div class="t" style="top:108.6px;height:12px;line-height:12px;font-size:10px;color:#c4c4c4;letter-spacing:0.1px;left:840.82px;transform:translateX(-50%);">-600</div>
<div class="t" style="top:108.6px;height:12px;line-height:12px;font-size:10px;color:#c4c4c4;letter-spacing:0.1px;left:897.79px;transform:translateX(-50%);">-450</div>
<div class="t" style="top:108.6px;height:12px;line-height:12px;font-size:10px;color:#c4c4c4;letter-spacing:0.1px;left:954.76px;transform:translateX(-50%);">-300</div>
<div class="t" style="top:108.6px;height:12px;line-height:12px;font-size:10px;color:#c4c4c4;letter-spacing:0.1px;left:1011.73px;transform:translateX(-50%);">-150</div>
<div class="t" style="top:108.6px;height:12px;line-height:12px;font-size:10px;color:#c4c4c4;letter-spacing:0.1px;left:1068.7px;transform:translateX(-50%);">0</div>
<div class="t" style="top:108.6px;height:12px;line-height:12px;font-size:10px;color:#c4c4c4;letter-spacing:0.1px;left:1125.67px;transform:translateX(-50%);">150</div>
<div class="t" style="top:108.6px;height:12px;line-height:12px;font-size:10px;color:#c4c4c4;letter-spacing:0.1px;left:1182.64px;transform:translateX(-50%);">300</div>
<div class="t" style="top:108.6px;height:12px;line-height:12px;font-size:10px;color:#c4c4c4;letter-spacing:0.1px;left:1239.61px;transform:translateX(-50%);">450</div>
<div class="t" style="top:108.6px;height:12px;line-height:12px;font-size:10px;color:#c4c4c4;letter-spacing:0.1px;left:1296.58px;transform:translateX(-50%);">600</div>
<div class="t" style="top:108.6px;height:12px;line-height:12px;font-size:10px;color:#c4c4c4;letter-spacing:0.1px;left:1353.55px;transform:translateX(-50%);">750</div>
<div class="t" style="top:108.6px;height:12px;line-height:12px;font-size:10px;color:#c4c4c4;letter-spacing:0.1px;left:1410.52px;transform:translateX(-50%);">900</div>
<div class="t" style="top:108.6px;height:12px;line-height:12px;font-size:10px;color:#c4c4c4;letter-spacing:0.1px;left:1467.49px;transform:translateX(-50%);">1050</div>
<div class="t" style="top:108.6px;height:12px;line-height:12px;font-size:10px;color:#c4c4c4;letter-spacing:0.1px;left:1524.46px;transform:translateX(-50%);">1200</div>
<div class="a" style="left:1570px;top:107px;width:17.5px;height:13px;overflow:hidden;"><div class="t" style="top:1.6px;height:12px;line-height:12px;font-size:10px;color:#c4c4c4;letter-spacing:0.1px;left:0.3px;">1350</div></div>
<svg style="left:530px;top:127px;" width="20" height="430.5" viewBox="0 0 20 430.5"><path d="M16 420.49 H20" stroke="#a8a8a8" stroke-width="1.2"/><path d="M16 409.10 H20" stroke="#a8a8a8" stroke-width="1.2"/><path d="M16 397.70 H20" stroke="#a8a8a8" stroke-width="1.2"/><path d="M12.1 386.31 H20" stroke="#b4b4b4" stroke-width="1.2"/><path d="M16 374.92 H20" stroke="#a8a8a8" stroke-width="1.2"/><path d="M16 363.52 H20" stroke="#a8a8a8" stroke-width="1.2"/><path d="M16 352.13 H20" stroke="#a8a8a8" stroke-width="1.2"/><path d="M16 340.73 H20" stroke="#a8a8a8" stroke-width="1.2"/><path d="M12.1 329.34 H20" stroke="#b4b4b4" stroke-width="1.2"/><path d="M16 317.95 H20" stroke="#a8a8a8" stroke-width="1.2"/><path d="M16 306.55 H20" stroke="#a8a8a8" stroke-width="1.2"/><path d="M16 295.16 H20" stroke="#a8a8a8" stroke-width="1.2"/><path d="M16 283.76 H20" stroke="#a8a8a8" stroke-width="1.2"/><path d="M12.1 272.37 H20" stroke="#b4b4b4" stroke-width="1.2"/><path d="M16 260.98 H20" stroke="#a8a8a8" stroke-width="1.2"/><path d="M16 249.58 H20" stroke="#a8a8a8" stroke-width="1.2"/><path d="M16 238.19 H20" stroke="#a8a8a8" stroke-width="1.2"/><path d="M16 226.79 H20" stroke="#a8a8a8" stroke-width="1.2"/><path d="M12.1 215.40 H20" stroke="#b4b4b4" stroke-width="1.2"/><path d="M16 204.01 H20" stroke="#a8a8a8" stroke-width="1.2"/><path d="M16 192.61 H20" stroke="#a8a8a8" stroke-width="1.2"/><path d="M16 181.22 H20" stroke="#a8a8a8" stroke-width="1.2"/><path d="M16 169.82 H20" stroke="#a8a8a8" stroke-width="1.2"/><path d="M12.1 158.43 H20" stroke="#b4b4b4" stroke-width="1.2"/><path d="M16 147.04 H20" stroke="#a8a8a8" stroke-width="1.2"/><path d="M16 135.64 H20" stroke="#a8a8a8" stroke-width="1.2"/><path d="M16 124.25 H20" stroke="#a8a8a8" stroke-width="1.2"/><path d="M16 112.85 H20" stroke="#a8a8a8" stroke-width="1.2"/><path d="M12.1 101.46 H20" stroke="#b4b4b4" stroke-width="1.2"/><path d="M16 90.07 H20" stroke="#a8a8a8" stroke-width="1.2"/><path d="M16 78.67 H20" stroke="#a8a8a8" stroke-width="1.2"/><path d="M16 67.28 H20" stroke="#a8a8a8" stroke-width="1.2"/><path d="M16 55.88 H20" stroke="#a8a8a8" stroke-width="1.2"/><path d="M12.1 44.49 H20" stroke="#b4b4b4" stroke-width="1.2"/><path d="M16 33.10 H20" stroke="#a8a8a8" stroke-width="1.2"/><path d="M16 21.70 H20" stroke="#a8a8a8" stroke-width="1.2"/><path d="M16 10.31 H20" stroke="#a8a8a8" stroke-width="1.2"/></svg>
<div class="t" style="left:517.6px;top:165.49px;width:40px;height:12px;line-height:12px;text-align:center;font-size:10px;letter-spacing:0.1px;color:#c4c4c4;transform:rotate(-90deg);">450</div>
<div class="t" style="left:517.6px;top:222.46px;width:40px;height:12px;line-height:12px;text-align:center;font-size:10px;letter-spacing:0.1px;color:#c4c4c4;transform:rotate(-90deg);">300</div>
<div class="t" style="left:517.6px;top:279.43px;width:40px;height:12px;line-height:12px;text-align:center;font-size:10px;letter-spacing:0.1px;color:#c4c4c4;transform:rotate(-90deg);">150</div>
<div class="t" style="left:517.6px;top:336.4px;width:40px;height:12px;line-height:12px;text-align:center;font-size:10px;letter-spacing:0.1px;color:#c4c4c4;transform:rotate(-90deg);">0</div>
<div class="t" style="left:517.6px;top:393.37px;width:40px;height:12px;line-height:12px;text-align:center;font-size:10px;letter-spacing:0.1px;color:#c4c4c4;transform:rotate(-90deg);">-150</div>
<div class="t" style="left:517.6px;top:450.34px;width:40px;height:12px;line-height:12px;text-align:center;font-size:10px;letter-spacing:0.1px;color:#c4c4c4;transform:rotate(-90deg);">-300</div>
<div class="t" style="left:517.6px;top:507.31px;width:40px;height:12px;line-height:12px;text-align:center;font-size:10px;letter-spacing:0.1px;color:#c4c4c4;transform:rotate(-90deg);">-450</div>
<div class="a" style="left:935.33px;top:208.83px;width:266.14px;height:266.14px;background:#6e6e6e;border:1px solid #4fd88f;"></div>
<div class="a" style="left:935.93px;top:209.43px;width:264.94px;height:264.94px;background:#00ffc9;border-radius:25.4px;"></div>
<div class="a" style="left:932.03px;top:205.53px;width:6.6px;height:6.6px;background:#ffffff;border:0.8px solid #4fd88f;"></div>
<div class="a" style="left:932.03px;top:471.67px;width:6.6px;height:6.6px;background:#ffffff;border:0.8px solid #4fd88f;"></div>
<div class="a" style="left:1198.17px;top:205.53px;width:6.6px;height:6.6px;background:#ffffff;border:0.8px solid #4fd88f;"></div>
<div class="a" style="left:1198.17px;top:471.67px;width:6.6px;height:6.6px;background:#ffffff;border:0.8px solid #4fd88f;"></div>
<svg style="left:1063.4px;top:336.9px;" width="10" height="10" viewBox="0 0 10 10"><circle cx="5" cy="5" r="4.1" fill="none" stroke="#164a3e" stroke-width="1"/><circle cx="5" cy="5" r="1" fill="#164a3e"/></svg>
<div class="a" style="left:935px;top:193px;width:9px;height:9.1px;background:#ffe57a;"></div>
<div class="t" style="top:190.7px;height:16px;line-height:16px;font-size:12px;color:#ffffff;letter-spacing:-0.03px;left:947.5px;">CenterRectangle</div>
<div class="t" style="top:460.5px;height:14px;line-height:14px;font-size:12px;color:#f2f2f2;letter-spacing:-0.14px;left:569.5px;"><span style="color:#f2f2f2">Hold S</span> <span style="color:#4c4c4c">Direct Layer Selection</span></div>
<div class="t" style="top:474.53px;height:14px;line-height:14px;font-size:12px;color:#f2f2f2;letter-spacing:-0.14px;left:569.5px;"><span style="color:#f2f2f2">Space</span> <span style="color:#4c4c4c">Play/ Stop</span></div>
<div class="t" style="top:488.56px;height:14px;line-height:14px;font-size:12px;color:#f2f2f2;letter-spacing:-0.14px;left:569.5px;"><span style="color:#f2f2f2">Space + click + drag</span> <span style="color:#4c4c4c">Pan</span></div>
<div class="t" style="top:502.59px;height:14px;line-height:14px;font-size:12px;color:#f2f2f2;letter-spacing:-0.14px;left:569.5px;"><span style="color:#f2f2f2">Alt + click + drag</span> <span style="color:#4c4c4c">Move Pivot Point</span></div>
<div class="t" style="top:516.62px;height:14px;line-height:14px;font-size:12px;color:#f2f2f2;letter-spacing:-0.14px;left:569.5px;"><span style="color:#f2f2f2">Shift</span> <span style="color:#4c4c4c">Enable Snapping</span></div>
<div class="t" style="top:535.5px;height:16px;line-height:16px;font-size:12px;color:#f2f2f2;letter-spacing:0.1px;left:569.5px;">00:00:00:08</div>
<div class="t" style="top:535.5px;height:16px;line-height:16px;font-size:12px;color:#f2f2f2;letter-spacing:0.11px;left:1058.5px;transform:translateX(-50%);">Viewport Quality: High</div>
<div class="a" style="left:530px;top:557.5px;width:1057.2px;height:22px;background:#464646;"></div>
<div class="a" style="left:535.5px;top:561px;width:77.5px;height:16px;background:#2f2f2f;border-radius:3px;"></div>
<div class="t" style="top:561.5px;height:16px;line-height:16px;font-size:12px;color:#f0f0f0;left:539px;">38%</div>
<svg style="left:599.5px;top:566.5px;" width="9" height="6" viewBox="0 0 9 6"><path d="M0.5 0.5 L4.5 4.5 L8.5 0.5" fill="none" stroke="#cfcfcf" stroke-width="1.1"/></svg>
<div class="a" style="left:866.5px;top:559.3px;width:99px;height:19.2px;background:#2f2f2f;border-radius:4px;"></div>
<div class="a" style="left:886.3px;top:560.3px;width:1px;height:17.2px;background:#252525;"></div>
<div class="a" style="left:906.1px;top:560.3px;width:1px;height:17.2px;background:#252525;"></div>
<div class="a" style="left:925.9px;top:560.3px;width:1px;height:17.2px;background:#252525;"></div>
<div class="a" style="left:945.7px;top:560.3px;width:1px;height:17.2px;background:#252525;"></div>
<div class="a" style="left:866.5px;top:559.3px;width:99px;height:19.2px;border-radius:4px;border:1px solid #262626;"></div>
<svg style="left:869.8px;top:563.7px;" width="11.6" height="10.5" viewBox="0 0 13 11"><path d="M1 0 V11" stroke="#dcdcdc" stroke-width="2"/><path d="M12.5 0 V11 L3.6 5.5 Z" fill="#dcdcdc"/></svg>
<svg style="left:889.8px;top:563.7px;" width="11.6" height="10.5" viewBox="0 0 13 11"><path d="M8.6 0 V11 L0 5.5 Z" fill="#dcdcdc"/><path d="M11.6 0 V11" stroke="#dcdcdc" stroke-width="2"/></svg>
<svg style="left:911px;top:563.7px;" width="9.2" height="10.5" viewBox="0 0 10 11"><path d="M0 0 L9.5 5.5 L0 11 Z" fill="#dcdcdc"/></svg>
<svg style="left:929.6px;top:563.7px;" width="11.6" height="10.5" viewBox="0 0 13 11"><path d="M1.4 0 V11" stroke="#dcdcdc" stroke-width="2"/><path d="M4.4 0 L13 5.5 L4.4 11 Z" fill="#dcdcdc"/></svg>
<svg style="left:950.6px;top:563.7px;" width="11.6" height="10.5" viewBox="0 0 13 11"><path d="M0.5 0 L9.4 5.5 L0.5 11 Z" fill="#dcdcdc"/><path d="M12 0 V11" stroke="#dcdcdc" stroke-width="2"/></svg>
<div class="a" style="left:971px;top:559.3px;width:20px;height:19.2px;background:#2f2f2f;border-radius:4px;border:1px solid #262626;"></div>
<svg style="left:973.8px;top:562.6px;" width="14" height="12" viewBox="0 0 14 12"><path d="M7.4 4 H1.6 Q0.7 4 0.7 4.9 V10 Q0.7 10.9 1.6 10.9 H12 Q12.9 10.9 12.9 10 V6" fill="none" stroke="#dcdcdc" stroke-width="1.2"/><path d="M7.8 0.4 L13.2 3.6 L7.8 6.6 Z" fill="#dcdcdc"/></svg>
<!-- parts.p05_right -->
<div class="a" style="left:1231.5px;top:560px;width:37.5px;height:18px;background:#2d2d2d;border-radius:3px;"></div>
<svg style="left:1235px;top:565px;" width="14" height="8" viewBox="0 0 14 8"><path d="M0 4 L3 0.3 H13.5 V7.7 H3 Z" fill="#f0f0f0"/><circle cx="4.2" cy="4" r="1.3" fill="#2d2d2d"/></svg>
<div class="t" style="top:561.5px;height:16px;line-height:16px;font-size:12px;color:#8a93a8;left:1262px;transform:translateX(-50%);">0</div>
<div class="a" style="left:1272px;top:559.5px;width:31.5px;height:19px;background:#2f2f2f;border-radius:4px;border:1px solid #262626;"></div><div class="a" style="left:1291px;top:560.5px;width:11.5px;height:17px;background:#383838;border-radius:0 3px 3px 0;"></div><div class="a" style="left:1291px;top:560.5px;width:1px;height:17px;background:#262626;"></div><svg style="left:1294.5px;top:565.5px;" width="6" height="7" viewBox="0 0 6 7"><path d="M0.5 0.5 L5.3 3.5 L0.5 6.5 Z" fill="none" stroke="#7a7a7a" stroke-width="0.9"/></svg>
<svg style="left:1275.5px;top:563px;" width="13" height="12" viewBox="0 0 13 12"><path d="M0 4 H3 L7 0.5 V11.5 L3 8 H0 Z" fill="#2ecc71"/><path d="M8.8 3.2 Q10.5 6 8.8 8.8 M10.6 1.6 Q13.4 6 10.6 10.4" fill="none" stroke="#2ecc71" stroke-width="1.1"/></svg>
<div class="a" style="left:1307px;top:559.5px;width:31.5px;height:19px;background:#2f2f2f;border-radius:4px;border:1px solid #262626;"></div><div class="a" style="left:1326px;top:560.5px;width:11.5px;height:17px;background:#383838;border-radius:0 3px 3px 0;"></div><div class="a" style="left:1326px;top:560.5px;width:1px;height:17px;background:#262626;"></div><svg style="left:1329.5px;top:565.5px;" width="6" height="7" viewBox="0 0 6 7"><path d="M0.5 0.5 L5.3 3.5 L0.5 6.5 Z" fill="none" stroke="#7a7a7a" stroke-width="0.9"/></svg>
<svg style="left:1310.5px;top:563px;" width="13" height="12" viewBox="0 0 13 12"><g transform="rotate(45 6.5 6)"><path d="M3.2 11.5 V5 A3.3 3.3 0 0 1 9.8 5 V11.5" fill="none" stroke="#f0f0f0" stroke-width="2.5"/></g></svg>
<div class="a" style="left:1342px;top:559.5px;width:31.5px;height:19px;background:#2f2f2f;border-radius:4px;border:1px solid #262626;"></div><div class="a" style="left:1361px;top:560.5px;width:11.5px;height:17px;background:#383838;border-radius:0 3px 3px 0;"></div><div class="a" style="left:1361px;top:560.5px;width:1px;height:17px;background:#262626;"></div><svg style="left:1364.5px;top:565.5px;" width="6" height="7" viewBox="0 0 6 7"><path d="M0.5 0.5 L5.3 3.5 L0.5 6.5 Z" fill="none" stroke="#7a7a7a" stroke-width="0.9"/></svg>
<svg style="left:1345.5px;top:562.5px;" width="13" height="13" viewBox="0 0 13 13"><path d="M4 0 V13 M9 0 V13 M0 4 H13 M0 9 H13" stroke="#f0f0f0" stroke-width="1.2"/></svg>
<div class="a" style="left:1377px;top:559.5px;width:19.5px;height:19px;background:#2f2f2f;border-radius:4px;border:1px solid #262626;"></div>
<svg style="left:1380px;top:564px;" width="14" height="11" viewBox="0 0 14 11"><rect x="0" y="0" width="3.4" height="3.4" fill="#2ecc71"/><rect x="0" y="5" width="3.4" height="6" fill="#2ecc71"/><rect x="5" y="0.6" width="8.4" height="5" fill="none" stroke="#2ecc71" stroke-width="1.2"/><rect x="4.6" y="7.6" width="9.4" height="3.4" fill="#2ecc71"/></svg>
<div class="a" style="left:1400.3px;top:559.5px;width:19.5px;height:19px;background:#2f2f2f;border-radius:4px;border:1px solid #262626;"></div>
<svg style="left:1403.5px;top:564.5px;" width="14" height="9" viewBox="0 0 14 9"><path d="M0 0 H1.6 L5 4.5 L1.6 9 H0 L3.4 4.5 Z M4.4 0 H6 L9.4 4.5 L6 9 H4.4 L7.8 4.5 Z M8.8 0 H10.4 L13.8 4.5 L10.4 9 H8.8 L12.2 4.5 Z" fill="#f0f0f0" stroke="#f0f0f0" stroke-width="0.6"/></svg>
<div class="a" style="left:1423.3px;top:559.5px;width:31.5px;height:19px;background:#2f2f2f;border-radius:4px;border:1px solid #262626;"></div><div class="a" style="left:1442.3px;top:560.5px;width:11.5px;height:17px;background:#383838;border-radius:0 3px 3px 0;"></div><div class="a" style="left:1442.3px;top:560.5px;width:1px;height:17px;background:#262626;"></div><svg style="left:1445.8px;top:565.5px;" width="6" height="7" viewBox="0 0 6 7"><path d="M0.5 0.5 L5.3 3.5 L0.5 6.5 Z" fill="none" stroke="#7a7a7a" stroke-width="0.9"/></svg>
<svg style="left:1426px;top:563.5px;" width="14" height="12" viewBox="0 0 14 12"><rect x="0.7" y="0.7" width="12.6" height="8.4" fill="#2a2a2a" stroke="#f0f0f0" stroke-width="1.3"/><rect x="0" y="10" width="14" height="1.8" fill="#f0f0f0"/></svg>
<div class="a" style="left:1458px;top:559.5px;width:31.5px;height:19px;background:#2f2f2f;border-radius:4px;border:1px solid #262626;"></div><div class="a" style="left:1477px;top:560.5px;width:11.5px;height:17px;background:#383838;border-radius:0 3px 3px 0;"></div><div class="a" style="left:1477px;top:560.5px;width:1px;height:17px;background:#262626;"></div><svg style="left:1480.5px;top:565.5px;" width="6" height="7" viewBox="0 0 6 7"><path d="M0.5 0.5 L5.3 3.5 L0.5 6.5 Z" fill="none" stroke="#7a7a7a" stroke-width="0.9"/></svg>
<svg style="left:1461px;top:563.5px;" width="14" height="12" viewBox="0 0 14 12"><rect x="0.5" y="0.5" width="8" height="5.4" fill="none" stroke="#c0c0c0" stroke-width="1"/><path d="M10.5 3 V8 H3 M12.5 5.4 V10.4 H5.4" fill="none" stroke="#9a9a9a" stroke-width="1"/></svg>
<div class="a" style="left:1493px;top:559.5px;width:31.5px;height:19px;background:#2f2f2f;border-radius:4px;border:1px solid #262626;"></div><div class="a" style="left:1512px;top:560.5px;width:11.5px;height:17px;background:#383838;border-radius:0 3px 3px 0;"></div><div class="a" style="left:1512px;top:560.5px;width:1px;height:17px;background:#262626;"></div><svg style="left:1515.5px;top:565.5px;" width="6" height="7" viewBox="0 0 6 7"><path d="M0.5 0.5 L5.3 3.5 L0.5 6.5 Z" fill="none" stroke="#7a7a7a" stroke-width="0.9"/></svg>
<svg style="left:1496px;top:562.5px;" width="14" height="14" viewBox="0 0 14 14"><rect x="0" y="0" width="9" height="9" fill="#b8b8b8"/><rect x="5" y="5" width="8.4" height="8.4" fill="#2f2f2f" stroke="#f0f0f0" stroke-width="1.1"/></svg>
<div class="a" style="left:1528px;top:559.5px;width:31.5px;height:19px;background:#2f2f2f;border-radius:4px;border:1px solid #262626;"></div><div class="a" style="left:1547px;top:560.5px;width:11.5px;height:17px;background:#383838;border-radius:0 3px 3px 0;"></div><div class="a" style="left:1547px;top:560.5px;width:1px;height:17px;background:#262626;"></div><svg style="left:1550.5px;top:565.5px;" width="6" height="7" viewBox="0 0 6 7"><path d="M0.5 0.5 L5.3 3.5 L0.5 6.5 Z" fill="none" stroke="#7a7a7a" stroke-width="0.9"/></svg>
<svg style="left:1531.5px;top:563px;" width="12" height="12" viewBox="0 0 12 12"><rect x="0" y="0" width="3" height="3" fill="#2ecc71"/><rect x="6" y="0" width="3" height="3" fill="#2ecc71"/><rect x="3" y="3" width="3" height="3" fill="#2ecc71"/><rect x="9" y="3" width="3" height="3" fill="#2ecc71"/><rect x="0" y="6" width="3" height="3" fill="#2ecc71"/><rect x="6" y="6" width="3" height="3" fill="#2ecc71"/><rect x="3" y="9" width="3" height="3" fill="#2ecc71"/><rect x="9" y="9" width="3" height="3" fill="#2ecc71"/></svg>
<div class="a" style="left:1563px;top:559.5px;width:19.5px;height:19px;background:#2f2f2f;border-radius:4px;border:1px solid #262626;"></div>
<svg style="left:1565.6px;top:562.6px;" width="13" height="13" viewBox="0 0 14.4 14.4"><rect x="5.8" y="-0.2" width="2.8" height="4" rx="0.5" fill="#dcdcdc" transform="rotate(0 7.2 7.2)"/><rect x="5.8" y="-0.2" width="2.8" height="4" rx="0.5" fill="#dcdcdc" transform="rotate(45 7.2 7.2)"/><rect x="5.8" y="-0.2" width="2.8" height="4" rx="0.5" fill="#dcdcdc" transform="rotate(90 7.2 7.2)"/><rect x="5.8" y="-0.2" width="2.8" height="4" rx="0.5" fill="#dcdcdc" transform="rotate(135 7.2 7.2)"/><rect x="5.8" y="-0.2" width="2.8" height="4" rx="0.5" fill="#dcdcdc" transform="rotate(180 7.2 7.2)"/><rect x="5.8" y="-0.2" width="2.8" height="4" rx="0.5" fill="#dcdcdc" transform="rotate(225 7.2 7.2)"/><rect x="5.8" y="-0.2" width="2.8" height="4" rx="0.5" fill="#dcdcdc" transform="rotate(270 7.2 7.2)"/><rect x="5.8" y="-0.2" width="2.8" height="4" rx="0.5" fill="#dcdcdc" transform="rotate(315 7.2 7.2)"/><circle cx="7.2" cy="7.2" r="5" fill="#dcdcdc"/><circle cx="7.2" cy="7.2" r="2.5" fill="#2f2f2f"/></svg>
<div class="a" style="left:1593px;top:85px;width:321px;height:22px;background:#1c1c1c;"></div>
<div class="a" style="left:1593px;top:85px;width:40px;height:22px;background:#464646;border-radius:4px 4px 0 0;"></div>
<div class="t" style="top:88.5px;height:16px;line-height:16px;font-size:12px;color:#f0f0f0;left:1598px;">Color</div>
<div class="a" style="left:1633.5px;top:85px;width:69px;height:22px;background:#2a2a2a;border-radius:4px 4px 0 0;"></div>
<div class="t" style="top:88.5px;height:16px;line-height:16px;font-size:12px;color:#f0f0f0;letter-spacing:-0.27px;left:1638.5px;">Add Layers</div>
<div class="a" style="left:1593px;top:107px;width:321px;height:377px;background:#464646;"></div>
<div class="a" style="left:1900px;top:107px;width:14px;height:377px;background:#3a3a3a;"></div>
<div class="a" style="left:1902.3px;top:107.8px;width:9.6px;height:302.6px;background:#585858;border-radius:5px;"></div>
<div class="a" style="left:1646.1px;top:119.7px;width:200px;height:200px;border-radius:50%;background:conic-gradient(from 90deg,#ff0000,#f400f4,#0000ff,#00e6f6,#00ff00,#eef200,#ff0000);"></div>
<div class="a" style="left:1670.9px;top:144.5px;width:150.4px;height:150.4px;background:#464646;border-radius:50%;"></div>
<div class="a" style="left:1701.8px;top:175.9px;width:90.2px;height:90.2px;background:linear-gradient(to right,#000,rgba(0,0,0,0)),linear-gradient(to bottom,#fff,#f00);"></div>
<svg style="left:1737.8px;top:168.9px;" width="14" height="14" viewBox="0 0 14 14"><circle cx="7" cy="7" r="6" fill="none" stroke="#e8e8e8" stroke-width="1"/></svg>
<svg style="left:1825.9px;top:212.9px;" width="14" height="14" viewBox="0 0 14 14"><circle cx="7" cy="7" r="6" fill="none" stroke="#f4f4f4" stroke-width="1"/></svg>
<div class="a" style="left:1600px;top:333px;width:22px;height:22px;background:#7a7a7a;border-radius:3px;"></div>
<div class="t" style="top:337px;height:16px;line-height:16px;font-size:12px;color:#f0f0f0;left:1625.5px;">Gray</div>
<div class="a" style="left:1871px;top:333px;width:22.5px;height:22px;background:#2f2f2f;border-radius:4px;border:1px solid #262626;"></div>
<svg style="left:1876px;top:337.5px;" width="13" height="13" viewBox="0 0 13 13"><path d="M0.8 12.2 L1.6 9.6 L7 4.2 L8.8 6 L3.4 11.4 Z" fill="none" stroke="#c8c8c8" stroke-width="1"/><path d="M6.4 3 L10 6.6 M8 2 Q10 -0.4 11.8 1.2 Q13.4 3 11 5 L10 6.6 L6.4 3 Z" fill="#e0e0e0" stroke="#e0e0e0" stroke-width="0.8"/></svg>
<div class="a" style="left:1600px;top:360px;width:50px;height:18px;background:#3a3a3a;border-radius:3px;border:1px solid #2c2c2c;"></div>
<div class="t" style="top:361.5px;height:16px;line-height:16px;font-size:12px;color:#f0f0f0;left:1603px;">Hex</div>
<svg style="left:1636px;top:366.5px;" width="9" height="6" viewBox="0 0 9 6"><path d="M0.5 0.5 L4.5 4.5 L8.5 0.5" fill="none" stroke="#cfcfcf" stroke-width="1.1"/></svg>
<div class="a" style="left:1653px;top:358px;width:240.5px;height:22px;background:#2b2b2b;border-radius:3px;"></div>
<div class="t" style="top:361.5px;height:16px;line-height:16px;font-size:11px;color:#555;left:1657.5px;">#</div>
<div class="t" style="top:361.5px;height:16px;line-height:16px;font-size:12px;color:#f0f0f0;left:1670px;">7a7a7a</div>
<div class="a" style="left:1600px;top:390.2px;width:233px;height:3.6px;background:#e4e4e4;border-radius:2px;"></div>
<svg style="left:1828.3px;top:386.5px;" width="11" height="11" viewBox="0 0 11 11"><circle cx="5.5" cy="5.5" r="5.2" fill="#79d2b5"/><circle cx="5.5" cy="5.5" r="2" fill="#4fae92"/></svg>
<div class="a" style="left:1849px;top:384px;width:44.5px;height:15.5px;background:#2b2b2b;border-radius:3px;"></div>
<div class="t" style="top:384.3px;height:16px;line-height:16px;font-size:12px;color:#555;left:1853px;">A</div>
<div class="t" style="top:384.3px;height:16px;line-height:16px;font-size:12px;color:#f0f0f0;left:1866px;">255</div>
<div class="a" style="left:1597.3px;top:406px;width:298.6px;height:22px;background:#2b2b2b;"></div>
<div class="a" style="left:1599.2px;top:408.3px;width:147.5px;height:19.7px;background:#464646;border-radius:4px 4px 0 0;"></div>
<div class="t" style="top:410.2px;height:16px;line-height:16px;font-size:12px;color:#f0f0f0;letter-spacing:-0.33px;left:1673px;transform:translateX(-50%);">Swatches</div>
<div class="a" style="left:1747.5px;top:408.3px;width:146.5px;height:19.7px;background:#2b2b2b;border-radius:4px 4px 0 0;"></div>
<div class="t" style="top:410.2px;height:16px;line-height:16px;font-size:12px;color:#b4b4b4;letter-spacing:0.05px;left:1820.5px;transform:translateX(-50%);">Generator</div>
<div class="a" style="left:1598.4px;top:431.4px;width:256.3px;height:17.2px;background:#5a5a5a;border-radius:3px;"></div>
<div class="a" style="left:1599.2px;top:432.2px;width:62px;height:15.6px;background:#2b2b2b;border-radius:2px;"></div>
<svg style="left:1605.5px;top:435px;" width="11" height="10" viewBox="0 0 11 10"><path d="M1 0 V10 M4 0 V10" stroke="#2ecc71" stroke-width="1.6"/><path d="M6.6 0.6 L9.8 9.6" stroke="#2ecc71" stroke-width="1.6"/></svg>
<div class="t" style="top:432.5px;height:16px;line-height:16px;font-size:12px;color:#f0f0f0;letter-spacing:0.15px;left:1621px;">Library</div>
<svg style="left:1670.5px;top:435px;" width="11" height="10" viewBox="0 0 11 10"><path d="M0 0.5 H4 L5.2 1.8 H11 V10 H0 Z" fill="#e0e0e0"/><path d="M1.8 4.4 H3 M4.4 4.4 H9.4 M1.8 6.4 H3 M4.4 6.4 H9.4 M1.8 8.4 H3 M4.4 8.4 H9.4" stroke="#5a5a5a" stroke-width="1"/></svg>
<div class="t" style="top:432.5px;height:16px;line-height:16px;font-size:12px;color:#f0f0f0;letter-spacing:0.08px;left:1686.2px;">Project</div>
<svg style="left:1738px;top:434.5px;" width="8" height="10" viewBox="0 0 8 10"><path d="M0.6 0.6 H5 L7.4 3 V9.4 H0.6 Z M5 0.6 V3 H7.4" fill="none" stroke="#e0e0e0" stroke-width="1"/></svg>
<div class="t" style="top:432.5px;height:16px;line-height:16px;font-size:12px;color:#f0f0f0;letter-spacing:-0.56px;left:1752px;">Scene</div>
<svg style="left:1801px;top:435px;" width="10" height="10" viewBox="0 0 10 10"><path d="M3 0.6 H7 Q9.4 0.6 9.4 3 V5 L5 9.4 H3 Q0.6 9.4 0.6 7 V3 Q0.6 0.6 3 0.6 Z M9.4 5 H6.4 Q5 5 5 6.4 V9.4" fill="none" stroke="#e0e0e0" stroke-width="1"/></svg>
<div class="t" style="top:432.5px;height:16px;line-height:16px;font-size:12px;color:#f0f0f0;letter-spacing:-0.3px;left:1816px;">Labels</div>
<div class="a" style="left:1857.9px;top:431.4px;width:37.6px;height:17.2px;background:#5a5a5a;border-radius:3px;"></div>
<div class="a" style="left:1858.7px;top:432.2px;width:18px;height:15.6px;background:#2b2b2b;border-radius:2px;"></div>
<svg style="left:1863.3px;top:435.7px;" width="9" height="9" viewBox="0 0 9 9"><rect x="0" y="0" width="3.6" height="3.6" fill="#2ecc71"/><rect x="5.2" y="0" width="3.6" height="3.6" fill="#2ecc71"/><rect x="0" y="5.2" width="3.6" height="3.6" fill="#2ecc71"/><rect x="5.2" y="5.2" width="3.6" height="3.6" fill="#2ecc71"/></svg>
<svg style="left:1881px;top:436px;" width="10" height="8" viewBox="0 0 10 8"><path d="M0 0.6 H10 M0 4 H10 M0 7.4 H10" stroke="#e8e8e8" stroke-width="1"/></svg>
<div class="a" style="left:1598.4px;top:453px;width:275.3px;height:16px;background:#444444;border-radius:3px;border:1px solid #2c2c2c;"></div>
<div class="t" style="top:453.5px;height:16px;line-height:16px;font-size:12px;color:#f0f0f0;left:1601px;">new</div>
<svg style="left:1860.5px;top:458.5px;" width="9" height="6" viewBox="0 0 9 6"><path d="M0.5 0.5 L4.5 4.5 L8.5 0.5" fill="none" stroke="#cfcfcf" stroke-width="1.1"/></svg>
<div class="a" style="left:1881px;top:460.3px;width:1.6px;height:1.6px;background:#e0e0e0;"></div>
<div class="a" style="left:1885.5px;top:460.3px;width:1.6px;height:1.6px;background:#e0e0e0;"></div>
<div class="a" style="left:1890px;top:460.3px;width:1.6px;height:1.6px;background:#e0e0e0;"></div>
<div class="a" style="left:1598.4px;top:470px;width:297px;height:14px;background:#2b2b2b;"></div>
<div class="a" style="left:1600px;top:472px;width:18px;height:12px;background:#9b4dff;border-radius:3px 3px 0 0;"></div>
<div class="a" style="left:1622.02px;top:472px;width:18px;height:12px;background:#4da3ff;border-radius:3px 3px 0 0;"></div>
<div class="a" style="left:1644.04px;top:472px;width:18px;height:12px;background:#ff7a4d;border-radius:3px 3px 0 0;"></div>
<div class="a" style="left:1666.06px;top:472px;width:18px;height:12px;background:#4dffb0;border-radius:3px 3px 0 0;"></div>
<div class="a" style="left:1688.08px;top:472px;width:18px;height:12px;background:#ff4d5e;border-radius:3px 3px 0 0;"></div>
<div class="a" style="left:1710.1px;top:472px;width:18px;height:12px;background:#ff4dc4;border-radius:3px 3px 0 0;"></div>
<div class="a" style="left:1732.12px;top:472px;width:18px;height:12px;background:#ffd24d;border-radius:3px 3px 0 0;"></div>
<div class="a" style="left:1754.14px;top:472px;width:18px;height:12px;background:#4169e1;border-radius:3px 3px 0 0;"></div>
<div class="a" style="left:1776.16px;top:472px;width:18px;height:12px;background:#5ce6d6;border-radius:3px 3px 0 0;"></div>
<div class="a" style="left:1798.18px;top:472px;width:18px;height:12px;background:#da7fd6;border-radius:3px 3px 0 0;"></div>
<div class="a" style="left:1820.2px;top:472px;width:18px;height:12px;background:#b5ef8a;border-radius:3px 3px 0 0;"></div>
<div class="a" style="left:1842.22px;top:472px;width:18px;height:12px;background:#6a4dff;border-radius:3px 3px 0 0;"></div>
<div class="a" style="left:1593px;top:490px;width:321px;height:22px;background:#1c1c1c;"></div>
<div class="a" style="left:1593px;top:490px;width:38px;height:22px;background:#464646;border-radius:4px 4px 0 0;"></div>
<div class="t" style="top:493.5px;height:16px;line-height:16px;font-size:12px;color:#f0f0f0;left:1598px;">Align</div>
<div class="a" style="left:1593px;top:512px;width:321px;height:67.5px;background:#464646;"></div>
<div class="t" style="top:524px;height:16px;line-height:16px;font-size:12px;color:#f0f0f0;letter-spacing:0.06px;left:1601px;">Alignment</div>
<div class="t" style="top:552px;height:16px;line-height:16px;font-size:12px;color:#f0f0f0;letter-spacing:0.3px;left:1601px;">Distribution</div>
<div class="a" style="left:1790.5px;top:522.3px;width:53.5px;height:17.4px;background:#2b2b2b;border-radius:4px;border:1px solid #222;"></div><div class="a" style="left:1808.3px;top:523.3px;width:1px;height:15px;background:#444;"></div><div class="a" style="left:1826.1px;top:523.3px;width:1px;height:15px;background:#444;"></div>
<div class="a" style="left:1852px;top:522.3px;width:53.5px;height:17.4px;background:#2b2b2b;border-radius:4px;border:1px solid #222;"></div><div class="a" style="left:1869.8px;top:523.3px;width:1px;height:15px;background:#444;"></div><div class="a" style="left:1887.6px;top:523.3px;width:1px;height:15px;background:#444;"></div>
<div class="a" style="left:1790.5px;top:550.3px;width:53.5px;height:17.4px;background:#2b2b2b;border-radius:4px;border:1px solid #222;"></div><div class="a" style="left:1808.3px;top:551.3px;width:1px;height:15px;background:#444;"></div><div class="a" style="left:1826.1px;top:551.3px;width:1px;height:15px;background:#444;"></div>
<svg style="left:1793.5px;top:525.5px;" width="12" height="11" viewBox="0 0 12 11"><path d="M0.6 0 V11" stroke="#f0f0f0" stroke-width="1.2"/><path d="M3 3.4 H9 M3 7.8 H11.5" stroke="#f0f0f0" stroke-width="1.6"/></svg>
<svg style="left:1811.5px;top:525.5px;" width="12" height="11" viewBox="0 0 12 11"><path d="M6 0 V11" stroke="#f0f0f0" stroke-width="1.2"/><path d="M2.4 3.4 H9.6 M0.6 7.8 H11.4" stroke="#f0f0f0" stroke-width="1.6"/></svg>
<svg style="left:1829px;top:525.5px;" width="12" height="11" viewBox="0 0 12 11"><path d="M11.4 0 V11" stroke="#f0f0f0" stroke-width="1.2"/><path d="M3 3.4 H9 M0.5 7.8 H9" stroke="#f0f0f0" stroke-width="1.6"/></svg>
<svg style="left:1855px;top:525.5px;" width="12" height="11" viewBox="0 0 12 11"><path d="M0 0.6 H12" stroke="#f0f0f0" stroke-width="1.2"/><path d="M4 3 V11 M8.4 3 V7.5" stroke="#f0f0f0" stroke-width="1.6"/></svg>
<svg style="left:1873px;top:525.5px;" width="12" height="11" viewBox="0 0 12 11"><path d="M0 5.5 H12" stroke="#f0f0f0" stroke-width="1.2"/><path d="M4 0.5 V10.5 M8.4 2.4 V8.6" stroke="#f0f0f0" stroke-width="1.6"/></svg>
<svg style="left:1891px;top:525.5px;" width="12" height="11" viewBox="0 0 12 11"><path d="M0 10.4 H12" stroke="#f0f0f0" stroke-width="1.2"/><path d="M4 4 V8.4 M8.4 0 V8.4" stroke="#f0f0f0" stroke-width="1.6"/></svg>
<svg style="left:1792.8px;top:552.6px;" width="13" height="13" viewBox="0 0 13 13"><path d="M0.6 0 V13 M11.8 0 V13" stroke="#f0f0f0" stroke-width="1"/><path d="M6.2 3.4 V10" stroke="#f0f0f0" stroke-width="2.4"/></svg>
<svg style="left:1810.2px;top:552.6px;" width="14" height="13" viewBox="0 0 14 13"><path d="M0 0.7 H14 M0 12 H14" stroke="#f0f0f0" stroke-width="1"/><path d="M3.2 6.3 H11" stroke="#f0f0f0" stroke-width="2.2"/></svg>
<svg style="left:1828px;top:552.4px;" width="14" height="13.4" viewBox="0 0 14 13.4"><path d="M0 2.6 V0.6 Q0 0 0.6 0 H2.6 M11.4 0 H13.4 Q14 0 14 0.6 V2.6 M14 10.8 V12.8 Q14 13.4 13.4 13.4 H11.4 M2.6 13.4 H0.6 Q0 13.4 0 12.8 V10.8" fill="none" stroke="#f0f0f0" stroke-width="1"/><path d="M3 7.6 V11 M6.9 5.6 V9 M10.8 3.4 V7.2" stroke="#f0f0f0" stroke-width="2.2"/></svg>
<!-- parts.p06_tb2icons -->
<div class="a" style="left:1372.5px;top:50.8px;width:27px;height:26.8px;background:#2e2e2e;border-radius:5px;border:1px solid #242424;"></div>
<div class="a" style="left:1402.5px;top:50.8px;width:27px;height:26.8px;background:#2e2e2e;border-radius:5px;border:1px solid #242424;"></div>
<div class="a" style="left:1432.5px;top:50.8px;width:27px;height:26.8px;background:#2e2e2e;border-radius:5px;border:1px solid #242424;"></div>
<div class="a" style="left:1462.5px;top:50.8px;width:27px;height:26.8px;background:#2e2e2e;border-radius:5px;border:1px solid #242424;"></div>
<div class="a" style="left:1497.5px;top:50.8px;width:27px;height:26.8px;background:#2e2e2e;border-radius:5px;border:1px solid #242424;"></div>
<div class="a" style="left:1527.5px;top:50.8px;width:27px;height:26.8px;background:#2e2e2e;border-radius:5px;border:1px solid #242424;"></div>
<div class="a" style="left:1562.5px;top:50.8px;width:27px;height:26.8px;background:#2e2e2e;border-radius:5px;border:1px solid #242424;"></div>
<div class="a" style="left:1592.5px;top:50.8px;width:27px;height:26.8px;background:#2e2e2e;border-radius:5px;border:1px solid #242424;"></div>
<div class="a" style="left:1622.5px;top:50.8px;width:27px;height:26.8px;background:#2e2e2e;border-radius:5px;border:1px solid #242424;"></div>
<div class="a" style="left:1652.5px;top:50.8px;width:27px;height:26.8px;background:#2e2e2e;border-radius:5px;border:1px solid #242424;"></div>
<div class="a" style="left:1687.5px;top:50.8px;width:27px;height:26.8px;background:#2e2e2e;border-radius:5px;border:1px solid #242424;"></div>
<div class="a" style="left:1722.5px;top:50.8px;width:27px;height:26.8px;background:#2e2e2e;border-radius:5px;border:1px solid #242424;"></div>
<div class="a" style="left:1752.5px;top:50.8px;width:27px;height:26.8px;background:#2e2e2e;border-radius:5px;border:1px solid #242424;"></div>
<div class="a" style="left:1787.5px;top:50.8px;width:27px;height:26.8px;background:#2e2e2e;border-radius:5px;border:1px solid #242424;"></div>
<div class="a" style="left:1817.5px;top:50.8px;width:27px;height:26.8px;background:#2e2e2e;border-radius:5px;border:1px solid #242424;"></div>
<div class="a" style="left:1847.5px;top:50.8px;width:27px;height:26.8px;background:#2e2e2e;border-radius:5px;border:1px solid #242424;"></div>
<div class="a" style="left:1882.5px;top:50.8px;width:27px;height:26.8px;background:#2e2e2e;border-radius:5px;border:1px solid #242424;"></div>
<div class="a" style="left:1492.2px;top:62.6px;width:2.6px;height:2.6px;background:#262626;border-radius:1.3px;"></div>
<div class="a" style="left:1557.2px;top:62.6px;width:2.6px;height:2.6px;background:#262626;border-radius:1.3px;"></div>
<div class="a" style="left:1682.2px;top:62.6px;width:2.6px;height:2.6px;background:#262626;border-radius:1.3px;"></div>
<div class="a" style="left:1717.2px;top:62.6px;width:2.6px;height:2.6px;background:#262626;border-radius:1.3px;"></div>
<div class="a" style="left:1782.2px;top:62.6px;width:2.6px;height:2.6px;background:#262626;border-radius:1.3px;"></div>
<div class="a" style="left:1877.2px;top:62.6px;width:2.6px;height:2.6px;background:#262626;border-radius:1.3px;"></div>
<svg style="left:1372.2px;top:50.3px;" width="27" height="27" viewBox="0 0 27 27"><circle cx="6" cy="6" r="1.55" fill="#e8d86e"/><circle cx="13.5" cy="6" r="1.55" fill="#e8d86e"/><circle cx="21" cy="6" r="1.55" fill="#e8d86e"/><circle cx="6" cy="13.5" r="1.55" fill="#e8d86e"/><circle cx="13.5" cy="13.5" r="1.55" fill="#e8d86e"/><circle cx="21" cy="13.5" r="1.55" fill="#e8d86e"/><circle cx="6" cy="21" r="1.55" fill="#e8d86e"/><circle cx="13.5" cy="21" r="1.55" fill="#e8d86e"/><circle cx="21" cy="21" r="1.55" fill="#e8d86e"/></svg>
<svg style="left:1402.2px;top:50.3px;" width="27" height="27" viewBox="0 0 27 27"><path d="M4.5 8 L8.5 3.8 H22.5 L19.8 8 Z" fill="#c8c8c8"/><path d="M19.8 8 L22.5 3.8 V18.5 L19.8 22.6 Z" fill="#f0f0f0"/><rect x="4.5" y="8" width="15.3" height="14.6" fill="#e8d86e"/></svg>
<svg style="left:1432.2px;top:50.3px;" width="27" height="27" viewBox="0 0 27 27"><rect x="4" y="3.7" width="19.2" height="19.2" rx="5" fill="none" stroke="#e6e6e6" stroke-width="1.1"/><rect x="8.8" y="7.8" width="2.8" height="12" fill="#e8d86e"/><rect x="13" y="7.8" width="4.8" height="2.6" fill="#e8d86e"/><rect x="13" y="12.6" width="4" height="2.6" fill="#e8d86e"/></svg>
<svg style="left:1462.2px;top:50.3px;" width="27" height="27" viewBox="0 0 27 27"><circle cx="6.2" cy="6.6" r="1.7" fill="#e8d86e"/><circle cx="17.5" cy="5.6" r="1.6" fill="#d0d0d0"/><circle cx="11.2" cy="9.6" r="1.6" fill="#d0d0d0"/><circle cx="20.2" cy="13.4" r="2.7" fill="#e8d86e"/><circle cx="12.2" cy="16.6" r="2.7" fill="#d0d0d0"/><circle cx="5.4" cy="17.6" r="1.6" fill="#e8d86e"/><circle cx="18.4" cy="21.4" r="1.6" fill="#e8d86e"/></svg>
<svg style="left:1497.2px;top:50.3px;" width="27" height="27" viewBox="0 0 27 27"><path d="M3.5 13.3 H5.5 M8.5 13.3 H12.5 M15 13.3 H22" stroke="#90e09a" stroke-width="1.8"/><path d="M16 7 L22.4 13.3 L16 19.6" fill="none" stroke="#90e09a" stroke-width="1.8"/></svg>
<svg style="left:1527.2px;top:50.3px;" width="27" height="27" viewBox="0 0 27 27"><path d="M4.6 3.4 V23.4" stroke="#e6e6e6" stroke-width="1"/><rect x="8" y="7.4" width="9" height="5" fill="#90e09a"/><rect x="8" y="14.4" width="14.4" height="5" fill="#90e09a"/></svg>
<svg style="left:1562.2px;top:50.3px;" width="27" height="27" viewBox="0 0 27 27"><path d="M5.5 13.4 H21.5 M13.5 5.4 V21.4" stroke="#484848" stroke-width="4.4"/><circle cx="13.5" cy="5.4" r="2" fill="#8fc8ff"/><circle cx="5.5" cy="13.4" r="2" fill="#8fc8ff"/><circle cx="13.5" cy="13.4" r="2" fill="#8fc8ff"/><circle cx="21.5" cy="13.4" r="2" fill="#8fc8ff"/><circle cx="13.5" cy="21.4" r="2" fill="#8fc8ff"/></svg>
<svg style="left:1592.2px;top:50.3px;" width="27" height="27" viewBox="0 0 27 27"><rect x="3.2" y="10.9" width="20.6" height="5" rx="2.5" fill="#484848"/><circle cx="5.6" cy="13.4" r="2" fill="#8fc8ff"/><circle cx="13.5" cy="13.4" r="2" fill="#8fc8ff"/><circle cx="21.4" cy="13.4" r="2" fill="#8fc8ff"/></svg>
<svg style="left:1622.2px;top:50.3px;" width="27" height="27" viewBox="0 0 27 27"><path d="M16.6 6.4 A7.2 7.2 0 0 0 16.6 20.4" fill="none" stroke="#e6e6e6" stroke-width="1.6"/><path d="M15.6 2.4 V9.6 M13.6 6.4 H19 M15.6 17 V24.4 M13.6 20.4 H19" stroke="#7fcf8a" stroke-width="1.3"/></svg>
<svg style="left:1652.2px;top:50.3px;" width="27" height="27" viewBox="0 0 27 27"><path d="M2.6 7.4 H24.4 M2.6 19.4 H24.4" stroke="#e6e6e6" stroke-width="1"/><rect x="3" y="10" width="3.8" height="6.8" fill="#e8d86e"/><rect x="9.4" y="10" width="8.4" height="6.8" fill="#e8d86e"/><rect x="20.2" y="10" width="3.8" height="6.8" fill="#e8d86e"/></svg>
<svg style="left:1687.2px;top:50.3px;" width="27" height="27" viewBox="0 0 27 27"><path d="M4.2 7.8 L16.6 3.6 L17.4 6 L12.4 7.8 L15.6 17 L13 17.9 L9.8 8.7 L5 10.3 Z" fill="#e8d86e" stroke="#e8d86e" stroke-width="1"/><path d="M5 20 Q8 24 12 21.2 Q16 18.4 19 20 Q21 21 22.4 23.4" fill="none" stroke="#e6e6e6" stroke-width="1"/></svg>
<svg style="left:1722.2px;top:50.3px;" width="27" height="27" viewBox="0 0 27 27"><path d="M3.6 5.6 H23.4" stroke="#a8d8ff" stroke-width="1.8"/><rect x="3.6" y="8.6" width="3.8" height="3.8" fill="#d8d8d8"/><rect x="8.8" y="13.4" width="8.6" height="3.8" fill="#d8d8d8"/><rect x="18.8" y="18.4" width="4.6" height="3.8" fill="#d8d8d8"/></svg>
<svg style="left:1752.2px;top:50.3px;" width="27" height="27" viewBox="0 0 27 27"><path d="M3.6 5.6 H23.4" stroke="#a8d8ff" stroke-width="1.8"/><rect x="3.6" y="8.6" width="11.6" height="3.8" fill="#d8d8d8"/><rect x="7.8" y="13.4" width="11.6" height="3.8" fill="#d8d8d8"/><rect x="12.8" y="18.4" width="10.6" height="3.8" fill="#d8d8d8"/></svg>
<svg style="left:1787.2px;top:50.3px;" width="27" height="27" viewBox="0 0 27 27"><rect x="3" y="5.6" width="21" height="15.8" fill="none" stroke="#e6e6e6" stroke-width="1"/><rect x="5.2" y="8" width="4.4" height="11" fill="#e8d86e"/><rect x="11.3" y="8" width="4.4" height="11" fill="#e8d86e"/><rect x="17.4" y="8" width="4.4" height="11" fill="#e8d86e"/></svg>
<svg style="left:1817.2px;top:50.3px;" width="27" height="27" viewBox="0 0 27 27"><rect x="3" y="5.6" width="21" height="15.8" fill="none" stroke="#e6e6e6" stroke-width="1"/><rect x="5.2" y="8" width="16.6" height="4.4" fill="#e8d86e"/><rect x="5.2" y="14.6" width="16.6" height="4.4" fill="#e8d86e"/></svg>
<svg style="left:1847.2px;top:50.3px;" width="27" height="27" viewBox="0 0 27 27"><rect x="3" y="5.6" width="21" height="15.8" fill="none" stroke="#e6e6e6" stroke-width="1"/><rect x="5.2" y="8" width="7.4" height="4.4" fill="#e8d86e"/><rect x="14.4" y="8" width="7.4" height="4.4" fill="#e8d86e"/><rect x="5.2" y="14.6" width="7.4" height="4.4" fill="#e8d86e"/><rect x="14.4" y="14.6" width="7.4" height="4.4" fill="#e8d86e"/></svg>
<svg style="left:1882.2px;top:50.3px;" width="27" height="27" viewBox="0 0 27 27"><rect x="3.4" y="8" width="13.6" height="11.4" rx="1.6" fill="#d8d8d8"/><rect x="6" y="5.6" width="6.8" height="1.3" fill="#d8d8d8"/><path d="M18 12 L23.4 8.6 V18.6 L18 15.4 Z" fill="#d8d8d8"/><circle cx="6.6" cy="11" r="1.1" fill="#2e2e2e"/></svg>
<!-- parts.p07_scene -->
<div class="a" style="left:494px;top:586px;width:1420px;height:22px;background:#1c1c1c;"></div>
<div class="a" style="left:494px;top:586px;width:89px;height:22px;background:#464646;border-radius:4px 4px 0 0;"></div>
<div class="t" style="top:589.5px;height:16px;line-height:16px;font-size:12px;color:#f0f0f0;letter-spacing:-0.18px;left:499.5px;">Scene Window</div>
<div class="a" style="left:584.3px;top:586px;width:99.7px;height:22px;background:#2b2b2b;border-radius:4px 4px 0 0;"></div>
<div class="t" style="top:589.5px;height:16px;line-height:16px;font-size:12px;color:#f0f0f0;letter-spacing:-0.12px;left:589.5px;">JavaScript Editor</div>
<div class="a" style="left:685.4px;top:586px;width:111.6px;height:22px;background:#2b2b2b;border-radius:4px 4px 0 0;"></div>
<div class="t" style="top:589.5px;height:16px;line-height:16px;font-size:12px;color:#f0f0f0;letter-spacing:-0.18px;left:690.5px;">Dependency Graph</div>
<div class="a" style="left:494px;top:608px;width:1420px;height:390px;background:#3a3a3a;"></div>
<div class="a" style="left:499px;top:610px;width:1409.5px;height:19.5px;background:#464646;border-radius:3px 3px 0 0;"></div>
<div class="t" style="top:612px;height:16px;line-height:16px;font-size:12px;color:#f0f0f0;letter-spacing:-0.05px;left:1203.8px;transform:translateX(-50%);">Composition 1</div>
<div class="a" style="left:494px;top:629.5px;width:699px;height:42.5px;background:#464646;"></div>
<div class="a" style="left:496.6px;top:632.4px;width:488.2px;height:19.5px;background:#262626;border-radius:10px;"></div>
<svg style="left:500.5px;top:635.2px;" width="14" height="14" viewBox="0 0 14 14"><circle cx="5.5" cy="5.5" r="4.6" fill="none" stroke="#d8d8d8" stroke-width="1.1"/><path d="M9 9 L12.5 12.5" stroke="#d8d8d8" stroke-width="1.8" stroke-linecap="round"/></svg>
<div class="t" style="top:634.5px;height:16px;line-height:16px;font-size:12px;color:#8c8c8c;letter-spacing:-0.26px;left:520.5px;">Enter a layer name</div>
<div class="a" style="left:987.2px;top:632.5px;width:19.5px;height:19.2px;background:#2f2f2f;border-radius:4px;border:1px solid #262626;"></div>
<svg style="left:991.5px;top:636.6px;" width="11" height="11" viewBox="0 0 11 11"><path d="M5.5 0.5 V10.5 M0.5 5.5 H10.5" stroke="#f0f0f0" stroke-width="1.6"/></svg>
<svg style="left:1002px;top:647px;" width="3.4" height="3.4" viewBox="0 0 3.4 3.4"><path d="M0 3.4 L3.4 3.4 L3.4 0 Z" fill="#2ecc71"/></svg>
<div class="a" style="left:1031.3px;top:632.5px;width:19.5px;height:19.2px;background:#2f2f2f;border-radius:4px;border:1px solid #262626;"></div>
<div class="a" style="left:1053.2px;top:632.5px;width:19.5px;height:19.2px;background:#2f2f2f;border-radius:4px;border:1px solid #262626;"></div>
<div class="a" style="left:1075px;top:632.5px;width:19.5px;height:19.2px;background:#2f2f2f;border-radius:4px;border:1px solid #262626;"></div>
<svg style="left:1034px;top:635px;" width="15" height="15" viewBox="0 0 15 15"><circle cx="5.4" cy="9.6" r="4" fill="#5a5a5a"/><circle cx="7.2" cy="7.6" r="4" fill="#8a8a8a"/><circle cx="9.4" cy="5.4" r="4.2" fill="#e6e6e6"/></svg>
<svg style="left:1056.5px;top:636px;" width="13" height="13" viewBox="0 0 13 13"><circle cx="1.6" cy="1.8" r="1" fill="#d8d8d8"/><circle cx="6.5" cy="1.2" r="1" fill="#d8d8d8"/><circle cx="1.2" cy="6.8" r="1" fill="#d8d8d8"/><path d="M7.5 4 Q7.8 7.3 11 7.6 Q7.8 7.9 7.5 11.2 Q7.2 7.9 4 7.6 Q7.2 7.3 7.5 4 Z" fill="#f0f0f0" stroke="#f0f0f0" stroke-width="0.6"/><path d="M10 13 L13 13 L13 10 Z" fill="#2ecc71"/></svg>
<svg style="left:1078px;top:636px;" width="14" height="12" viewBox="0 0 14 12"><path d="M0 1.5 H4 M7 1.5 H14 M0 6 H7 M10 6 H14 M0 10.5 H3 M6 10.5 H14" stroke="#e0e0e0" stroke-width="1"/><circle cx="5.5" cy="1.5" r="1.3" fill="none" stroke="#e0e0e0" stroke-width="0.9"/><circle cx="8.5" cy="6" r="1.3" fill="none" stroke="#e0e0e0" stroke-width="0.9"/><circle cx="4.5" cy="10.5" r="1.3" fill="none" stroke="#e0e0e0" stroke-width="0.9"/></svg>
<div class="a" style="left:1092px;top:628px;width:96.2px;height:27px;background:#2b2b2b;border:3.3px solid #baee1f;"></div>
<div class="t" style="top:634.8px;height:16px;line-height:16px;font-size:12px;color:#4e4e4e;left:1101.5px;">F</div>
<div class="t" style="top:634.8px;height:16px;line-height:16px;font-size:12px;color:#f0f0f0;left:1114px;">8</div>
<svg style="left:501px;top:657.5px;" width="9" height="11" viewBox="0 0 9 11"><path d="M2 5 V3.2 A2.5 2.5 0 0 1 7 3.2 V5" fill="none" stroke="#d8d8d8" stroke-width="1.3"/><rect x="0.4" y="4.8" width="8.2" height="6" rx="0.8" fill="#d8d8d8"/><circle cx="4.5" cy="7.6" r="0.9" fill="#464646"/></svg>
<svg style="left:517.3px;top:658.2px;" width="13" height="10" viewBox="0 0 13 10"><path d="M0.5 5 Q6.5 -1.6 12.5 5 Q6.5 11.6 0.5 5 Z" fill="none" stroke="#d8d8d8" stroke-width="1"/><circle cx="6.5" cy="5" r="1.9" fill="#d8d8d8"/></svg>
<svg style="left:536.8px;top:656.6px;" width="13" height="13" viewBox="0 0 13 13"><path d="M6.5 0.6 L12.2 3.6 V9.6 L6.5 12.6 L0.8 9.6 V3.6 Z M0.8 3.6 L6.5 6.6 L12.2 3.6 M6.5 6.6 V12.6" fill="none" stroke="#d8d8d8" stroke-width="1"/></svg>
<svg style="left:555.5px;top:657.5px;" width="14" height="12" viewBox="0 0 14 12"><path d="M0 4 H3 L7 0.5 V11.5 L3 8 H0 Z" fill="#d8d8d8"/><path d="M8.8 3.2 Q10.5 6 8.8 8.8 M10.6 1.6 Q13.4 6 10.6 10.4" fill="none" stroke="#d8d8d8" stroke-width="1.1"/></svg>
<svg style="left:575px;top:656.5px;" width="13" height="13" viewBox="0 0 13 13"><path d="M0.8 12.2 L1.6 9.6 L7 4.2 L8.8 6 L3.4 11.4 Z" fill="none" stroke="#9a9a9a" stroke-width="1"/><path d="M6.4 3 L10 6.6 M8 2 Q10 -0.4 11.8 1.2 Q13.4 3 11 5 L10 6.6 L6.4 3 Z" fill="#c8c8c8" stroke="#c8c8c8" stroke-width="0.8"/></svg>
<svg style="left:593.4px;top:659.2px;" width="14" height="8" viewBox="0 0 14 8"><path d="M0 4 L3 0.3 H13.5 V7.7 H3 Z" fill="#d8d8d8"/><circle cx="4.2" cy="4" r="1.3" fill="#464646"/></svg>
<div class="t" style="top:655.8px;height:16px;line-height:16px;font-size:12px;color:#f0f0f0;left:649.4px;">Name</div>
<div class="a" style="left:494px;top:672px;width:699px;height:304px;background:#2b2b2b;"></div>
<div class="a" style="left:494px;top:673px;width:685.5px;height:87px;background:#3a3a3a;"></div>
<div class="a" style="left:1179.5px;top:672px;width:13.5px;height:292px;background:#333;"></div>
<div class="a" style="left:1181.2px;top:673.4px;width:9.6px;height:287px;background:#4d4d4d;border-radius:5px;"></div>
<div class="a" style="left:494px;top:673px;width:683px;height:19.8px;background:#5a5643;border-radius:0 4px 4px 0;"></div>
<div class="a" style="left:496.6px;top:674px;width:17.2px;height:17.8px;background:#262626;border-radius:2px;"></div><div class="a" style="left:515px;top:674px;width:17.8px;height:17.8px;background:#262626;border-radius:2px;"></div><div class="a" style="left:534.3px;top:674px;width:17.6px;height:17.8px;background:#262626;border-radius:2px;"></div>
<svg style="left:517.3px;top:678px;" width="13" height="10" viewBox="0 0 13 10"><path d="M0.5 5 Q6.5 -1.6 12.5 5 Q6.5 11.6 0.5 5 Z" fill="none" stroke="#e0e0e0" stroke-width="1"/><circle cx="6.5" cy="5" r="1.9" fill="#e0e0e0"/></svg>
<div class="a" style="left:572.2px;top:674.6px;width:17.8px;height:17px;background:#ffe57a;border-radius:3.5px;border:1px solid #2a2a2a;"></div>
<svg style="left:593.4px;top:679px;" width="14" height="8" viewBox="0 0 14 8"><path d="M0 4 L3 0.3 H13.5 V7.7 H3 Z" fill="#e0e0e0"/><circle cx="4.2" cy="4" r="1.3" fill="#5a5643"/></svg>
<div class="a" style="left:610px;top:675.3px;width:32px;height:15.6px;background:#2b2b2b;border-radius:2px;"></div>
<div class="a" style="left:610px;top:675.3px;width:15px;height:15.6px;background:#333;border-radius:2px 0 0 2px;"></div>
<svg style="left:613.8px;top:680.2px;" width="9" height="6" viewBox="0 0 9 6"><path d="M0.6 0.6 L4.5 4.6 L8.4 0.6" fill="none" stroke="#8a8a8a" stroke-width="1.1"/></svg>
<svg style="left:630.6px;top:679.8px;" width="6.4" height="6.4" viewBox="0 0 6.4 6.4"><circle cx="3.2" cy="3.2" r="3" fill="#f0f0f0"/></svg>
<svg style="left:649.3px;top:676.8px;" width="12.4" height="12.4" viewBox="0 0 12.4 12.4"><rect x="0" y="0" width="1.6" height="1.6" fill="#e4e4e4"/><rect x="10.8" y="0" width="1.6" height="1.6" fill="#e4e4e4"/><rect x="0" y="10.8" width="1.6" height="1.6" fill="#e4e4e4"/><rect x="10.8" y="10.8" width="1.6" height="1.6" fill="#e4e4e4"/><path d="M3.3 0.8 H9.1 M3.3 11.6 H9.1 M0.8 3.3 V9.1 M11.6 3.3 V9.1" stroke="#f0dc6e" stroke-width="1.1"/></svg>
<div class="t" style="top:675.5px;height:16px;line-height:16px;font-size:12px;color:#f0f0f0;letter-spacing:-0.1px;left:667.2px;">CenterRectangle</div>
<svg style="left:1165.4px;top:678.5px;" width="9" height="9" viewBox="0 0 9 9"><circle cx="4.5" cy="4.5" r="3.8" fill="none" stroke="#8a8a8a" stroke-width="1"/></svg>
<svg style="left:633.5px;top:694px;" width="10" height="34" viewBox="0 0 10 34"><path d="M1 0 V33 M1 11.8 H9 M1 33 H9" fill="none" stroke="#c8c8c8" stroke-width="0.9" stroke-dasharray="1 1"/></svg>
<div class="t" style="top:698px;height:16px;line-height:16px;font-size:12px;color:#f0f0f0;letter-spacing:-0.25px;left:647.5px;">Rectangle.Corner Radius</div>
<div class="a" style="left:1081.3px;top:697.4px;width:83.3px;height:15.4px;background:#2b2b2b;border-radius:3px 0 0 3px;"></div>
<div class="a" style="left:1164.6px;top:697.4px;width:10.8px;height:15.4px;background:#333;border-radius:0 3px 3px 0;"></div>
<div class="t" style="top:697.5px;height:16px;line-height:16px;font-size:11px;color:#5e5e5e;left:1085.5px;">#</div>
<div class="t" style="top:697.5px;height:16px;line-height:16px;font-size:12px;color:#f0f0f0;left:1098.3px;">66.8</div>
<svg style="left:1152.4px;top:700.5px;" width="9" height="9" viewBox="0 0 9 9"><path d="M4.5 0.6 L8.4 4.5 L4.5 8.4 L0.6 4.5 Z" fill="#dcdcdc"/></svg>
<svg style="left:1167px;top:701.5px;" width="6" height="7" viewBox="0 0 6 7"><path d="M0.3 0.3 L5.5 3.5 L0.3 6.7 Z" fill="#8a8a8a"/></svg>
<div class="t" style="top:720px;height:16px;line-height:16px;font-size:12px;color:#f0f0f0;letter-spacing:-0.37px;left:647.5px;">Rectangle.Size.H</div>
<div class="a" style="left:1081.3px;top:719.6px;width:83.3px;height:15.4px;background:#2b2b2b;border-radius:3px 0 0 3px;"></div>
<div class="a" style="left:1164.6px;top:719.6px;width:10.8px;height:15.4px;background:#333;border-radius:0 3px 3px 0;"></div>
<div class="t" style="top:719.7px;height:16px;line-height:16px;font-size:12px;color:#5e5e5e;left:1085.5px;">H</div>
<div class="t" style="top:719.7px;height:16px;line-height:16px;font-size:12px;color:#f0f0f0;letter-spacing:-0.2px;left:1098.3px;">700.0</div>
<svg style="left:1152.4px;top:722.7px;" width="9" height="9" viewBox="0 0 9 9"><path d="M4.5 0.6 L8.4 4.5 L4.5 8.4 L0.6 4.5 Z" fill="#2ecc71"/></svg>
<svg style="left:1167px;top:723.7px;" width="6" height="7" viewBox="0 0 6 7"><path d="M0.3 0.3 L5.5 3.5 L0.3 6.7 Z" fill="#8a8a8a"/></svg>
<div class="a" style="left:625px;top:716px;width:558.2px;height:24.3px;border:3.3px solid #baee1f;"></div>
<div class="a" style="left:496.6px;top:740.6px;width:17.2px;height:17.8px;background:#262626;border-radius:2px;"></div><div class="a" style="left:515px;top:740.6px;width:17.8px;height:17.8px;background:#262626;border-radius:2px;"></div><div class="a" style="left:534.3px;top:740.6px;width:17.6px;height:17.8px;background:#262626;border-radius:2px;"></div>
<svg style="left:517.3px;top:744.4px;" width="13" height="10" viewBox="0 0 13 10"><path d="M0.5 5 Q6.5 -1.6 12.5 5 Q6.5 11.6 0.5 5 Z" fill="none" stroke="#e0e0e0" stroke-width="1"/><circle cx="6.5" cy="5" r="1.9" fill="#e0e0e0"/></svg>
<div class="a" style="left:572.2px;top:741px;width:17.8px;height:17px;background:#ffe57a;border-radius:3.5px;border:1px solid #2a2a2a;"></div>
<svg style="left:593.4px;top:745.4px;" width="14" height="8" viewBox="0 0 14 8"><path d="M0 4 L3 0.3 H13.5 V7.7 H3 Z" fill="#e0e0e0"/><circle cx="4.2" cy="4" r="1.3" fill="#3a3a3a"/></svg>
<svg style="left:649.3px;top:743.3px;" width="12.4" height="12.4" viewBox="0 0 12.4 12.4"><rect x="0" y="0" width="1.6" height="1.6" fill="#e4e4e4"/><rect x="10.8" y="0" width="1.6" height="1.6" fill="#e4e4e4"/><rect x="0" y="10.8" width="1.6" height="1.6" fill="#e4e4e4"/><rect x="10.8" y="10.8" width="1.6" height="1.6" fill="#e4e4e4"/><path d="M3.3 0.8 H9.1 M3.3 11.6 H9.1 M0.8 3.3 V9.1 M11.6 3.3 V9.1" stroke="#f0dc6e" stroke-width="1.1"/></svg>
<div class="t" style="top:742px;height:16px;line-height:16px;font-size:12px;color:#f0f0f0;letter-spacing:-0.3px;left:667.2px;">RectangleBG</div>
<svg style="left:1165.4px;top:744.6px;" width="9" height="9" viewBox="0 0 9 9"><circle cx="4.5" cy="4.5" r="3.8" fill="none" stroke="#8a8a8a" stroke-width="1"/></svg>
<div class="a" style="left:495.6px;top:964.3px;width:682.4px;height:9.5px;background:#4d4d4d;border-radius:5px;"></div>
<div class="a" style="left:494px;top:976px;width:699px;height:22px;background:#464646;"></div>
<div class="a" style="left:497px;top:977.5px;width:19.8px;height:19px;background:#2f2f2f;border-radius:4px;border:1px solid #262626;"></div>
<svg style="left:500px;top:983px;" width="14" height="8" viewBox="0 0 14 8"><path d="M0 4 L3 0.3 H13.5 V7.7 H3 Z" fill="#e0e0e0"/><circle cx="4.2" cy="4" r="1.3" fill="#2f2f2f"/></svg>
<div class="t" style="top:979.5px;height:16px;line-height:16px;font-size:12px;color:#f0f0f0;letter-spacing:-0.29px;left:520.7px;">1 selected</div>
<div class="a" style="left:984.2px;top:977.5px;width:19.5px;height:19px;background:#2f2f2f;border-radius:4px;border:1px solid #262626;"></div>
<svg style="left:988.5px;top:981.5px;" width="11" height="11" viewBox="0 0 11 11"><rect x="0.6" y="0.6" width="9.8" height="9.8" fill="none" stroke="#e0e0e0" stroke-width="1"/><rect x="3.8" y="3.8" width="3.4" height="3.4" fill="#e0e0e0"/></svg>
<div class="a" style="left:1007.4px;top:978.4px;width:183px;height:17.4px;background:#5a5a5a;border-radius:3px;"></div>
<div class="a" style="left:1008.2px;top:979.2px;width:85.5px;height:15.8px;background:#2b2b2b;border-radius:2px;"></div>
<svg style="left:1014px;top:982px;" width="12" height="10" viewBox="0 0 12 10"><path d="M0 1 H12 M3 5 H10 M1.5 9 H11" stroke="#2ecc71" stroke-width="1.8"/></svg>
<div class="t" style="top:979.5px;height:16px;line-height:16px;font-size:12px;color:#f0f0f0;letter-spacing:0px;left:1030px;">Time Editor</div>
<svg style="left:1102px;top:981.5px;" width="12" height="11" viewBox="0 0 12 11"><path d="M2.5 0 V9 H12 M0.5 9 H2.5 M2.5 9 V11" fill="none" stroke="#d0d0d0" stroke-width="1"/><path d="M2.5 9 L11 2.5" stroke="#d0d0d0" stroke-width="1"/></svg>
<div class="t" style="top:979.5px;height:16px;line-height:16px;font-size:12px;color:#e6e6e6;letter-spacing:-0.08px;left:1119.2px;">Graph Editor</div>
<div class="a" style="left:1193px;top:629.5px;width:4px;height:368.5px;background:#161616;"></div>
<div class="a" style="left:1194.6px;top:806px;width:1px;height:1px;background:#8a8a8a;"></div>
<div class="a" style="left:1194.6px;top:809px;width:1px;height:1px;background:#8a8a8a;"></div>
<div class="a" style="left:1194.6px;top:812px;width:1px;height:1px;background:#8a8a8a;"></div>
<div class="a" style="left:1194.6px;top:815px;width:1px;height:1px;background:#8a8a8a;"></div>
<div class="a" style="left:1194.6px;top:818px;width:1px;height:1px;background:#8a8a8a;"></div>
<div class="a" style="left:1194.6px;top:821px;width:1px;height:1px;background:#8a8a8a;"></div>
<div class="a" style="left:1194.6px;top:824px;width:1px;height:1px;background:#8a8a8a;"></div>
<!-- parts.p08_timeline -->
<div class="a" style="left:1197px;top:629.5px;width:717px;height:346.5px;background:#2b2b2b;"></div>
<div class="t" style="top:630.8px;height:16px;line-height:16px;font-size:12px;color:#e0e0e0;letter-spacing:-0.2px;left:1205.5px;transform:translateX(-50%);">0</div>
<div class="t" style="top:630.8px;height:16px;line-height:16px;font-size:12px;color:#e0e0e0;letter-spacing:-0.2px;left:1247.52px;transform:translateX(-50%);">15</div>
<div class="t" style="top:630.8px;height:16px;line-height:16px;font-size:12px;color:#e0e0e0;letter-spacing:-0.2px;left:1289.55px;transform:translateX(-50%);">30</div>
<div class="t" style="top:630.8px;height:16px;line-height:16px;font-size:12px;color:#e0e0e0;letter-spacing:-0.2px;left:1331.57px;transform:translateX(-50%);">45</div>
<div class="t" style="top:630.8px;height:16px;line-height:16px;font-size:12px;color:#e0e0e0;letter-spacing:-0.2px;left:1373.59px;transform:translateX(-50%);">60</div>
<div class="t" style="top:630.8px;height:16px;line-height:16px;font-size:12px;color:#e0e0e0;letter-spacing:-0.2px;left:1415.61px;transform:translateX(-50%);">75</div>
<div class="t" style="top:630.8px;height:16px;line-height:16px;font-size:12px;color:#e0e0e0;letter-spacing:-0.2px;left:1457.63px;transform:translateX(-50%);">90</div>
<div class="t" style="top:630.8px;height:16px;line-height:16px;font-size:12px;color:#e0e0e0;letter-spacing:-0.2px;left:1499.66px;transform:translateX(-50%);">105</div>
<div class="t" style="top:630.8px;height:16px;line-height:16px;font-size:12px;color:#e0e0e0;letter-spacing:-0.2px;left:1541.68px;transform:translateX(-50%);">120</div>
<div class="t" style="top:630.8px;height:16px;line-height:16px;font-size:12px;color:#e0e0e0;letter-spacing:-0.2px;left:1583.7px;transform:translateX(-50%);">135</div>
<div class="t" style="top:630.8px;height:16px;line-height:16px;font-size:12px;color:#e0e0e0;letter-spacing:-0.2px;left:1625.72px;transform:translateX(-50%);">150</div>
<div class="t" style="top:630.8px;height:16px;line-height:16px;font-size:12px;color:#e0e0e0;letter-spacing:-0.2px;left:1667.75px;transform:translateX(-50%);">165</div>
<div class="t" style="top:630.8px;height:16px;line-height:16px;font-size:12px;color:#e0e0e0;letter-spacing:-0.2px;left:1709.77px;transform:translateX(-50%);">180</div>
<div class="t" style="top:630.8px;height:16px;line-height:16px;font-size:12px;color:#e0e0e0;letter-spacing:-0.2px;left:1751.79px;transform:translateX(-50%);">195</div>
<div class="t" style="top:630.8px;height:16px;line-height:16px;font-size:12px;color:#e0e0e0;letter-spacing:-0.2px;left:1793.82px;transform:translateX(-50%);">210</div>
<div class="t" style="top:630.8px;height:16px;line-height:16px;font-size:12px;color:#e0e0e0;letter-spacing:-0.2px;left:1835.84px;transform:translateX(-50%);">225</div>
<div class="t" style="top:630.8px;height:16px;line-height:16px;font-size:12px;color:#e0e0e0;letter-spacing:-0.2px;left:1877.86px;transform:translateX(-50%);">240</div>
<svg style="left:1197px;top:629.5px;" width="717" height="25" viewBox="0 0 717 25"><path d="M10.00 16.5 V24.25" stroke="#b4b4b4" stroke-width="1.1"/><path d="M18.40 20.9 V24.25" stroke="#9a9a9a" stroke-width="1.1"/><path d="M26.81 20.9 V24.25" stroke="#9a9a9a" stroke-width="1.1"/><path d="M35.21 20.9 V24.25" stroke="#9a9a9a" stroke-width="1.1"/><path d="M43.62 20.9 V24.25" stroke="#9a9a9a" stroke-width="1.1"/><path d="M52.02 16.5 V24.25" stroke="#b4b4b4" stroke-width="1.1"/><path d="M60.43 20.9 V24.25" stroke="#9a9a9a" stroke-width="1.1"/><path d="M68.83 20.9 V24.25" stroke="#9a9a9a" stroke-width="1.1"/><path d="M77.24 20.9 V24.25" stroke="#9a9a9a" stroke-width="1.1"/><path d="M85.64 20.9 V24.25" stroke="#9a9a9a" stroke-width="1.1"/><path d="M94.05 16.5 V24.25" stroke="#b4b4b4" stroke-width="1.1"/><path d="M102.45 20.9 V24.25" stroke="#9a9a9a" stroke-width="1.1"/><path d="M110.85 20.9 V24.25" stroke="#9a9a9a" stroke-width="1.1"/><path d="M119.26 20.9 V24.25" stroke="#9a9a9a" stroke-width="1.1"/><path d="M127.66 20.9 V24.25" stroke="#9a9a9a" stroke-width="1.1"/><path d="M136.07 16.5 V24.25" stroke="#b4b4b4" stroke-width="1.1"/><path d="M144.47 20.9 V24.25" stroke="#9a9a9a" stroke-width="1.1"/><path d="M152.88 20.9 V24.25" stroke="#9a9a9a" stroke-width="1.1"/><path d="M161.28 20.9 V24.25" stroke="#9a9a9a" stroke-width="1.1"/><path d="M169.69 20.9 V24.25" stroke="#9a9a9a" stroke-width="1.1"/><path d="M178.09 16.5 V24.25" stroke="#b4b4b4" stroke-width="1.1"/><path d="M186.49 20.9 V24.25" stroke="#9a9a9a" stroke-width="1.1"/><path d="M194.90 20.9 V24.25" stroke="#9a9a9a" stroke-width="1.1"/><path d="M203.30 20.9 V24.25" stroke="#9a9a9a" stroke-width="1.1"/><path d="M211.71 20.9 V24.25" stroke="#9a9a9a" stroke-width="1.1"/><path d="M220.11 16.5 V24.25" stroke="#b4b4b4" stroke-width="1.1"/><path d="M228.52 20.9 V24.25" stroke="#9a9a9a" stroke-width="1.1"/><path d="M236.92 20.9 V24.25" stroke="#9a9a9a" stroke-width="1.1"/><path d="M245.33 20.9 V24.25" stroke="#9a9a9a" stroke-width="1.1"/><path d="M253.73 20.9 V24.25" stroke="#9a9a9a" stroke-width="1.1"/><path d="M262.13 16.5 V24.25" stroke="#b4b4b4" stroke-width="1.1"/><path d="M270.54 20.9 V24.25" stroke="#9a9a9a" stroke-width="1.1"/><path d="M278.94 20.9 V24.25" stroke="#9a9a9a" stroke-width="1.1"/><path d="M287.35 20.9 V24.25" stroke="#9a9a9a" stroke-width="1.1"/><path d="M295.75 20.9 V24.25" stroke="#9a9a9a" stroke-width="1.1"/><path d="M304.16 16.5 V24.25" stroke="#b4b4b4" stroke-width="1.1"/><path d="M312.56 20.9 V24.25" stroke="#9a9a9a" stroke-width="1.1"/><path d="M320.97 20.9 V24.25" stroke="#9a9a9a" stroke-width="1.1"/><path d="M329.37 20.9 V24.25" stroke="#9a9a9a" stroke-width="1.1"/><path d="M337.78 20.9 V24.25" stroke="#9a9a9a" stroke-width="1.1"/><path d="M346.18 16.5 V24.25" stroke="#b4b4b4" stroke-width="1.1"/><path d="M354.58 20.9 V24.25" stroke="#9a9a9a" stroke-width="1.1"/><path d="M362.99 20.9 V24.25" stroke="#9a9a9a" stroke-width="1.1"/><path d="M371.39 20.9 V24.25" stroke="#9a9a9a" stroke-width="1.1"/><path d="M379.80 20.9 V24.25" stroke="#9a9a9a" stroke-width="1.1"/><path d="M388.20 16.5 V24.25" stroke="#b4b4b4" stroke-width="1.1"/><path d="M396.61 20.9 V24.25" stroke="#9a9a9a" stroke-width="1.1"/><path d="M405.01 20.9 V24.25" stroke="#9a9a9a" stroke-width="1.1"/><path d="M413.42 20.9 V24.25" stroke="#9a9a9a" stroke-width="1.1"/><path d="M421.82 20.9 V24.25" stroke="#9a9a9a" stroke-width="1.1"/><path d="M430.22 16.5 V24.25" stroke="#b4b4b4" stroke-width="1.1"/><path d="M438.63 20.9 V24.25" stroke="#9a9a9a" stroke-width="1.1"/><path d="M447.03 20.9 V24.25" stroke="#9a9a9a" stroke-width="1.1"/><path d="M455.44 20.9 V24.25" stroke="#9a9a9a" stroke-width="1.1"/><path d="M463.84 20.9 V24.25" stroke="#9a9a9a" stroke-width="1.1"/><path d="M472.25 16.5 V24.25" stroke="#b4b4b4" stroke-width="1.1"/><path d="M480.65 20.9 V24.25" stroke="#9a9a9a" stroke-width="1.1"/><path d="M489.06 20.9 V24.25" stroke="#9a9a9a" stroke-width="1.1"/><path d="M497.46 20.9 V24.25" stroke="#9a9a9a" stroke-width="1.1"/><path d="M505.87 20.9 V24.25" stroke="#9a9a9a" stroke-width="1.1"/><path d="M514.27 16.5 V24.25" stroke="#b4b4b4" stroke-width="1.1"/><path d="M522.67 20.9 V24.25" stroke="#9a9a9a" stroke-width="1.1"/><path d="M531.08 20.9 V24.25" stroke="#9a9a9a" stroke-width="1.1"/><path d="M539.48 20.9 V24.25" stroke="#9a9a9a" stroke-width="1.1"/><path d="M547.89 20.9 V24.25" stroke="#9a9a9a" stroke-width="1.1"/><path d="M556.29 16.5 V24.25" stroke="#b4b4b4" stroke-width="1.1"/><path d="M564.70 20.9 V24.25" stroke="#9a9a9a" stroke-width="1.1"/><path d="M573.10 20.9 V24.25" stroke="#9a9a9a" stroke-width="1.1"/><path d="M581.51 20.9 V24.25" stroke="#9a9a9a" stroke-width="1.1"/><path d="M589.91 20.9 V24.25" stroke="#9a9a9a" stroke-width="1.1"/><path d="M598.32 16.5 V24.25" stroke="#b4b4b4" stroke-width="1.1"/><path d="M606.72 20.9 V24.25" stroke="#9a9a9a" stroke-width="1.1"/><path d="M615.12 20.9 V24.25" stroke="#9a9a9a" stroke-width="1.1"/><path d="M623.53 20.9 V24.25" stroke="#9a9a9a" stroke-width="1.1"/><path d="M631.93 20.9 V24.25" stroke="#9a9a9a" stroke-width="1.1"/><path d="M640.34 16.5 V24.25" stroke="#b4b4b4" stroke-width="1.1"/><path d="M648.74 20.9 V24.25" stroke="#9a9a9a" stroke-width="1.1"/><path d="M657.15 20.9 V24.25" stroke="#9a9a9a" stroke-width="1.1"/><path d="M665.55 20.9 V24.25" stroke="#9a9a9a" stroke-width="1.1"/><path d="M673.96 20.9 V24.25" stroke="#9a9a9a" stroke-width="1.1"/><path d="M682.36 16.5 V24.25" stroke="#b4b4b4" stroke-width="1.1"/><path d="M690.76 20.9 V24.25" stroke="#9a9a9a" stroke-width="1.1"/><path d="M699.17 20.9 V24.25" stroke="#9a9a9a" stroke-width="1.1"/><path d="M707.57 20.9 V24.25" stroke="#9a9a9a" stroke-width="1.1"/></svg>
<div class="a" style="left:1197px;top:654.5px;width:717px;height:15.6px;background:#464646;"></div>
<div class="a" style="left:1202px;top:652.8px;width:5px;height:17.6px;background:#79cdb5;border-radius:1.5px;"></div>
<div class="a" style="left:1907.2px;top:652.8px;width:5px;height:17.6px;background:#79cdb5;border-radius:1.5px;"></div>
<div class="a" style="left:1197px;top:670.1px;width:10px;height:293.9px;background:#232323;"></div>
<div class="a" style="left:1906.5px;top:670.1px;width:7.5px;height:293.9px;background:#232323;"></div>
<div class="a" style="left:1207px;top:674px;width:699.5px;height:18px;background:#fff68e;border-radius:3.5px;border:1px solid #ffffff;background-image:radial-gradient(circle,#dcc24e 0.5px,rgba(0,0,0,0) 0.9px),radial-gradient(circle,#dcc24e 0.5px,rgba(0,0,0,0) 0.9px);background-size:3px 3px;background-position:0 0,1.5px 1.5px;"></div>
<div class="t" style="top:675.3px;height:16px;line-height:16px;font-size:12px;color:#1c1c1c;letter-spacing:-0.1px;left:1215.4px;">CenterRectangle</div>
<div class="a" style="left:1207px;top:740.3px;width:699.5px;height:17.3px;background:#ffe57a;border-radius:3px;"></div>
<div class="t" style="top:741.3px;height:16px;line-height:16px;font-size:12px;color:#2a2a2a;letter-spacing:-0.3px;left:1215.4px;">RectangleBG</div>
<svg style="left:1197px;top:694px;" width="717" height="20" viewBox="0 0 717 20"><path d="M15.5 10 H102.0" stroke="#ffe57a" stroke-width="2"/><path d="M113.0 10 H144.0" stroke="#ffe57a" stroke-width="2"/><path d="M155.0 10 H228.4" stroke="#ffe57a" stroke-width="2"/><path d="M242.9 10 H256.5" stroke="#ffe57a" stroke-width="2" stroke-dasharray="4.6 4.7"/><path d="M267.5 10 H326.2" stroke="#ffe57a" stroke-width="2"/><path d="M340.7 10 H410.2" stroke="#ffe57a" stroke-width="2" stroke-dasharray="4.6 4.7"/><path d="M421.2 10 H701.5" stroke="#ffe57a" stroke-width="2"/></svg>
<svg style="left:1202px;top:699px;" width="10" height="10" viewBox="0 0 10 10"><path d="M5 0.8 L9.2 5 L5 9.2 L0.8 5 Z" fill="#d8d8d8"/></svg>
<svg style="left:1299.5px;top:699px;" width="10" height="10" viewBox="0 0 10 10"><path d="M5 0.8 L9.2 5 L5 9.2 L0.8 5 Z" fill="#d8d8d8"/></svg>
<svg style="left:1341.5px;top:699px;" width="10" height="10" viewBox="0 0 10 10"><path d="M5 0.8 L9.2 5 L5 9.2 L0.8 5 Z" fill="#d8d8d8"/></svg>
<svg style="left:1425.9px;top:699px;" width="10" height="10" viewBox="0 0 10 10"><path d="M5 0.8 L9.2 5 L5 9.2 L0.8 5 Z" fill="#d8d8d8"/></svg>
<svg style="left:1454px;top:699px;" width="10" height="10" viewBox="0 0 10 10"><path d="M5 0.8 L9.2 5 L5 9.2 L0.8 5 Z" fill="#d8d8d8"/></svg>
<svg style="left:1523.7px;top:699px;" width="10" height="10" viewBox="0 0 10 10"><path d="M5 0.8 L9.2 5 L5 9.2 L0.8 5 Z" fill="#d8d8d8"/></svg>
<svg style="left:1607.7px;top:699px;" width="10" height="10" viewBox="0 0 10 10"><path d="M5 0.8 L9.2 5 L5 9.2 L0.8 5 Z" fill="#d8d8d8"/></svg>
<svg style="left:1899px;top:699px;" width="10" height="10" viewBox="0 0 10 10"><path d="M5 0.8 L9.2 5 L5 9.2 L0.8 5 Z" fill="#d8d8d8"/></svg>
<svg style="left:1202px;top:699px;" width="5" height="10" viewBox="0 0 5 10"><path d="M5 0.8 L0.8 5 L5 9.2 Z" fill="#8e8e8e"/></svg>
<svg style="left:1224.5px;top:721.2px;" width="10" height="10" viewBox="0 0 10 10"><path d="M5 0.8 L9.2 5 L5 9.2 L0.8 5 Z" fill="#d8d8d8"/></svg>
<div class="a" style="left:1228.9px;top:652px;width:1.3px;height:310px;background:#79cdb5;"></div>
<svg style="left:1222px;top:643.5px;" width="15" height="10" viewBox="0 0 15 10"><path d="M0 0 H15 L7.5 9.5 Z" fill="#79cdb5"/></svg>
<div class="a" style="left:1200.6px;top:964px;width:711.8px;height:9.5px;background:#4d4d4d;border-radius:5px;"></div>
<div class="a" style="left:1197px;top:976px;width:717px;height:22px;background:#464646;"></div>
<div class="a" style="left:1203.3px;top:978px;width:17.5px;height:18.5px;background:#2f2f2f;border-radius:4px;border:1px solid #262626;"></div>
<svg style="left:1205.5px;top:981px;" width="13" height="13" viewBox="0 0 13 13"><path d="M0 1 H13 M0 4.6 H13 M0 8.2 H13" stroke="#e0e0e0" stroke-width="1.5"/><path d="M0 11.6 H8" stroke="#e0e0e0" stroke-width="1.5"/><path d="M10 13 L13 13 L13 10 Z" fill="#2ecc71"/></svg>
<div class="a" style="left:1223.5px;top:979.2px;width:150.2px;height:16px;background:#2b2b2b;border-radius:3px;"></div>
<div class="t" style="top:979.5px;height:16px;line-height:16px;font-size:12px;color:#f0f0f0;letter-spacing:-0.15px;left:1227px;">Default Keyframe Layer</div>
<div class="a" style="left:1380px;top:979.2px;width:69.7px;height:16px;background:#2b2b2b;border-radius:3px;"></div>
<div class="t" style="top:979.5px;height:16px;line-height:16px;font-size:12px;color:#4e4e4e;left:1384.5px;">F</div>
<div class="t" style="top:979.5px;height:16px;line-height:16px;font-size:12px;color:#9a9a9a;left:1397px;">-</div>
<div class="t" style="top:979.5px;height:16px;line-height:16px;font-size:12px;color:#f0f0f0;left:1456px;">Align:</div>
<div class="a" style="left:1493px;top:977.6px;width:51.5px;height:18.4px;background:#2b2b2b;border-radius:4px;border:1px solid #222;"></div>
<div class="a" style="left:1510px;top:979.5px;width:1px;height:15.5px;background:#444;"></div>
<div class="a" style="left:1527.3px;top:979.5px;width:1px;height:15.5px;background:#444;"></div>
<svg style="left:1496px;top:981px;" width="12" height="12" viewBox="0 0 12 12"><path d="M0.6 0 V12" stroke="#f0f0f0" stroke-width="1.1"/><rect x="2.6" y="2.4" width="2.2" height="2.2" fill="#6fd3b6"/><rect x="2.6" y="7.6" width="2.2" height="2.2" fill="#6fd3b6"/><path d="M5.8 3.5 H8.2 M5.8 8.7 H11.6" stroke="#f0f0f0" stroke-width="1.6"/></svg>
<svg style="left:1513px;top:981px;" width="12" height="12" viewBox="0 0 12 12"><path d="M6 0 V12" stroke="#f0f0f0" stroke-width="1.1"/><rect x="4.9" y="2.4" width="2.2" height="2.2" fill="#6fd3b6"/><rect x="4.9" y="7.6" width="2.2" height="2.2" fill="#6fd3b6"/><path d="M2.4 3.5 H4.2 M7.8 3.5 H9.6 M0.6 8.7 H4.2 M7.8 8.7 H11.4" stroke="#f0f0f0" stroke-width="1.6"/></svg>
<svg style="left:1530px;top:981px;" width="12" height="12" viewBox="0 0 12 12"><path d="M11.4 0 V12" stroke="#f0f0f0" stroke-width="1.1"/><rect x="7.2" y="2.4" width="2.2" height="2.2" fill="#6fd3b6"/><rect x="7.2" y="7.6" width="2.2" height="2.2" fill="#6fd3b6"/><path d="M3.8 3.5 H6.2 M0.4 8.7 H6.2" stroke="#f0f0f0" stroke-width="1.6"/></svg>
<div class="a" style="left:1549.3px;top:977.6px;width:17.3px;height:18.4px;background:#2f2f2f;border-radius:4px;border:1px solid #262626;"></div>
<svg style="left:1552px;top:980.8px;" width="12" height="12" viewBox="0 0 12 12"><path d="M3.4 1.2 H8.6 M3.4 10.8 H8.6 M1.2 3.4 V8.6 M10.8 3.4 V8.6" stroke="#c8c8c8" stroke-width="1"/><rect x="0.2" y="0.2" width="2.2" height="2.2" fill="none" stroke="#c8c8c8" stroke-width="0.7"/><rect x="9.6" y="0.2" width="2.2" height="2.2" fill="none" stroke="#c8c8c8" stroke-width="0.7"/><rect x="0.2" y="9.6" width="2.2" height="2.2" fill="none" stroke="#c8c8c8" stroke-width="0.7"/><rect x="9.6" y="9.6" width="2.2" height="2.2" fill="none" stroke="#c8c8c8" stroke-width="0.7"/><rect x="5.2" y="5.2" width="1.6" height="1.6" fill="#e8e8e8"/></svg>
<div class="a" style="left:1571px;top:977.2px;width:30.5px;height:19px;background:#2f2f2f;border-radius:4px;border:1px solid #262626;"></div><div class="a" style="left:1589.5px;top:978.2px;width:11px;height:17px;background:#3a3a3a;border-radius:0 3px 3px 0;"></div><div class="a" style="left:1589.5px;top:978.2px;width:1px;height:17px;background:#262626;"></div><svg style="left:1592.8px;top:983.8px;" width="6" height="7" viewBox="0 0 6 7"><path d="M0.5 0.5 L5.3 3.5 L0.5 6.5 Z" fill="none" stroke="#7a7a7a" stroke-width="0.9"/></svg>
<div class="a" style="left:1605.8px;top:977.2px;width:30.5px;height:19px;background:#2f2f2f;border-radius:4px;border:1px solid #262626;"></div><div class="a" style="left:1624.3px;top:978.2px;width:11px;height:17px;background:#3a3a3a;border-radius:0 3px 3px 0;"></div><div class="a" style="left:1624.3px;top:978.2px;width:1px;height:17px;background:#262626;"></div><svg style="left:1627.6px;top:983.8px;" width="6" height="7" viewBox="0 0 6 7"><path d="M0.5 0.5 L5.3 3.5 L0.5 6.5 Z" fill="none" stroke="#7a7a7a" stroke-width="0.9"/></svg>
<svg style="left:1574px;top:981px;" width="13" height="12" viewBox="0 0 13 12"><g transform="rotate(45 6.5 6)"><path d="M3.2 11.5 V5 A3.3 3.3 0 0 1 9.8 5 V11.5" fill="none" stroke="#d0d0d0" stroke-width="1.9"/></g></svg>
<svg style="left:1608.5px;top:981px;" width="14" height="12" viewBox="0 0 14 12"><path d="M5.4 0 V12 M7.8 3.4 V8.6" stroke="#d8d8d8" stroke-width="1"/><path d="M0.4 6 H3.6 M9.8 6 H13.6" stroke="#d8d8d8" stroke-width="1"/></svg>
<svg style="left:1743px;top:980.5px;" width="14" height="14" viewBox="0 0 14 14"><circle cx="6" cy="6" r="5" fill="none" stroke="#d8d8d8" stroke-width="1.1"/><path d="M3.4 6 H8.6" stroke="#d8d8d8" stroke-width="1.1"/><path d="M9.8 9.8 L13 13" stroke="#d8d8d8" stroke-width="1.8" stroke-linecap="round"/></svg>
<div class="a" style="left:1768px;top:985.8px;width:113px;height:3px;background:#3c3c3c;border-radius:2px;"></div>
<svg style="left:1761.5px;top:982px;" width="11" height="11" viewBox="0 0 11 11"><circle cx="5.5" cy="5.5" r="5.2" fill="#79d2b5"/><circle cx="5.5" cy="5.5" r="2" fill="#4fae92"/></svg>
<svg style="left:1887.5px;top:980.5px;" width="14" height="14" viewBox="0 0 14 14"><circle cx="6" cy="6" r="5" fill="none" stroke="#d8d8d8" stroke-width="1.1"/><path d="M3.4 6 H8.6 M6 3.4 V8.6" stroke="#d8d8d8" stroke-width="1.1"/><path d="M9.8 9.8 L13 13" stroke="#d8d8d8" stroke-width="1.8" stroke-linecap="round"/></svg>
<div class="a" style="left:494px;top:998px;width:1420px;height:5.6px;background:#1c1c1c;"></div>
<div class="a" style="left:494px;top:1003.6px;width:1420px;height:22.2px;background:#3a3a3a;"></div>
<div class="a" style="left:498.2px;top:1009.3px;width:2px;height:2px;background:#9a9a9a;"></div>
<div class="a" style="left:498.2px;top:1013.8px;width:2px;height:2px;background:#9a9a9a;"></div>
<div class="a" style="left:498.2px;top:1018.3px;width:2px;height:2px;background:#9a9a9a;"></div>
<div class="a" style="left:507.3px;top:1006.3px;width:17px;height:17px;background:#2a2a2a;border-radius:4px;border:1px solid #262626;"></div>
<svg style="left:509.5px;top:1008.3px;" width="13" height="13" viewBox="0 0 13 13"><path d="M0.5 0.5 H11.5 V8.5 H9 V11.5 L6 8.5 H0.5 Z" fill="#e6e6e6"/><path d="M2 2.6 H10 M2 4.6 H10 M2 6.6 H10" stroke="#2a2a2a" stroke-width="0.9"/><path d="M10.2 13 L13 13 L13 10.2 Z" fill="#2ecc71"/></svg>
<div class="a" style="left:527.9px;top:1008px;width:18px;height:14px;background:#e0c568;border-radius:2px;"></div>
<div class="t" style="top:1007.3px;height:16px;line-height:16px;font-size:11px;color:#3a3a3a;left:537px;transform:translateX(-50%);">0</div>
<svg style="left:553.8px;top:1011.8px;" width="6.4" height="6.4" viewBox="0 0 6.4 6.4"><circle cx="3.2" cy="3.2" r="3.2" fill="#e0c568"/></svg>
<div class="t" style="top:1008px;height:16px;line-height:16px;font-size:12px;color:#f0f0f0;letter-spacing:-0.29px;left:565.5px;">You are working in an unsaved scene.</div>
<div class="a" style="left:1477px;top:1006px;width:80px;height:18px;background:#d8c06a;border-radius:2px;"></div>
<div class="t" style="top:1007.5px;height:16px;line-height:16px;font-size:12px;color:#2a2a2a;letter-spacing:-0.41px;left:1482.5px;">Feedback</div>
<div class="a" style="left:1560px;top:1006px;width:109px;height:18px;background:#2ecc71;border-radius:2px;"></div>
<div class="t" style="top:1007.5px;height:16px;line-height:16px;font-size:12px;color:#2a2a2a;letter-spacing:-0.19px;left:1565.5px;">Upgrade to Pro</div>
<div class="a" style="left:1672px;top:1006px;width:130px;height:18px;background:#bb96f8;border-radius:2px;"></div>
<div class="t" style="top:1007.5px;height:16px;line-height:16px;font-size:12px;color:#2a2a2a;letter-spacing:-0.14px;left:1677.5px;">New Beta Available</div>
<div class="a" style="left:1804.8px;top:1006px;width:106.5px;height:18px;background:#45adf3;border-radius:2px;"></div>
<div class="t" style="top:1007.5px;height:16px;line-height:16px;font-size:12px;color:#2a2a2a;letter-spacing:-0.27px;left:1810.3px;">Tips and Tricks</div>
<svg style="left:1539px;top:1009px;" width="13" height="13" viewBox="0 0 13 13"><rect x="1" y="0.5" width="9" height="12" fill="#fafafa"/><path d="M6 9 L11 4 L12.5 5.5 L7.5 10.5 L5.5 11 Z" fill="#f08a5a"/></svg>
<svg style="left:1648px;top:1009px;" width="16" height="13" viewBox="0 0 16 13"><path d="M1 6 Q1 2 4 2 Q7 2 7 6 V12 H1 Z M9 6 Q9 2 12 2 Q15 2 15 6 V12 H9 Z" fill="#ffd23a"/></svg>
<svg style="left:1783px;top:1008.5px;" width="14" height="14" viewBox="0 0 14 14"><circle cx="7" cy="7.5" r="6" fill="#ffc83a"/><path d="M2 4 L7 0 L9 5 Z" fill="#e85ad0"/><circle cx="4.6" cy="7" r="1" fill="#7a4a1a"/><circle cx="9" cy="7" r="1" fill="#7a4a1a"/><path d="M4 10 Q7 12.4 10 10" stroke="#7a4a1a" fill="none" stroke-width="1"/></svg>
<svg style="left:1893px;top:1009px;" width="13" height="13" viewBox="0 0 13 13"><path d="M12.5 0.5 Q7 0.5 4 5 L2 5.5 L0.5 7.5 L3.4 8 L5 9.6 L5.5 12.5 L7.5 11 L8 9 Q12.5 6 12.5 0.5 Z" fill="#f0f0f5"/><circle cx="8.6" cy="4.4" r="1.4" fill="#5aa8f0"/><path d="M1 12 L3.6 9.4" stroke="#ff7a3a" stroke-width="1.6"/><path d="M9 0.8 Q11.6 1 12.3 4 Z" fill="#e84a4a"/></svg>
<div class="a" style="left:0px;top:1025.8px;width:1920px;height:4.2px;background:#262626;"></div>
</body></html>
